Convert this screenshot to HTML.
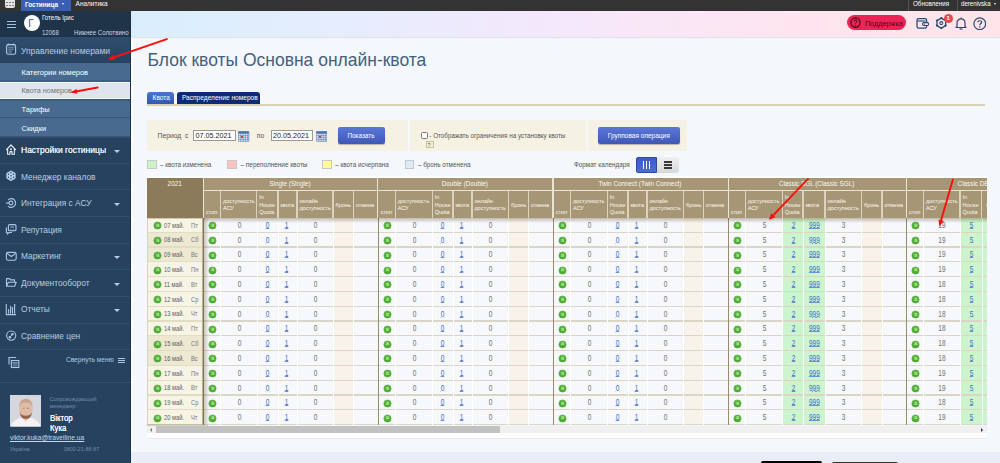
<!DOCTYPE html><html><head><meta charset="utf-8"><style>
html,body{margin:0;padding:0;} body{width:1000px;height:463px;overflow:hidden;position:relative;background:#f4f7fb;font-family:"Liberation Sans", sans-serif;} div{box-sizing:border-box;} u{text-decoration:underline;}
</style></head><body>
<div style="position:absolute;left:0px;top:0px;width:1000px;height:11px;background:#333;"></div>
<div style="position:absolute;left:5px;top:0px;width:10px;height:8px;background:#e6e6e6;border-radius:0 0 2px 2px;"></div>
<div style="position:absolute;left:6.4px;top:1.5px;width:1.6px;height:1.8px;background:#7a7a7a;"></div>
<div style="position:absolute;left:6.4px;top:4.5px;width:1.6px;height:1.8px;background:#7a7a7a;"></div>
<div style="position:absolute;left:9.4px;top:1.5px;width:1.6px;height:1.8px;background:#7a7a7a;"></div>
<div style="position:absolute;left:9.4px;top:4.5px;width:1.6px;height:1.8px;background:#7a7a7a;"></div>
<div style="position:absolute;left:12.4px;top:1.5px;width:1.6px;height:1.8px;background:#7a7a7a;"></div>
<div style="position:absolute;left:12.4px;top:4.5px;width:1.6px;height:1.8px;background:#7a7a7a;"></div>
<div style="position:absolute;left:20.6px;top:0px;width:50px;height:11px;background:#3b5eb5;"></div>
<div style="position:absolute;left:25px;top:1.6px;font-size:6.4px;line-height:1;color:#fff;white-space:nowrap;font-weight:bold;">Гостиница</div>
<div style="position:absolute;left:62.3px;top:3.2px;width:0;height:0;border-left:1.7px solid transparent;border-right:1.7px solid transparent;border-top:2.2px solid #fff;"></div>
<div style="position:absolute;left:75.6px;top:0.8px;font-size:6.46px;line-height:1;color:#fff;white-space:nowrap;">Аналитика</div>
<div style="position:absolute;left:908px;top:0px;width:1px;height:11px;background:#555;"></div>
<div style="position:absolute;left:912.8px;top:0.6px;font-size:6.6px;line-height:1;color:#fff;white-space:nowrap;transform:scaleX(0.95);transform-origin:0 0;">Обновления</div>
<div style="position:absolute;left:956.5px;top:0px;width:1px;height:11px;background:#555;"></div>
<div style="position:absolute;left:960.9px;top:0.5px;font-size:6.8px;line-height:1;color:#fff;white-space:nowrap;transform:scaleX(0.9);transform-origin:0 0;">derenivska</div>
<div style="position:absolute;left:994.3px;top:2.8px;width:0;height:0;border-left:1.7px solid transparent;border-right:1.7px solid transparent;border-top:2.2px solid #fff;"></div>
<div style="position:absolute;left:0px;top:11px;width:131px;height:452px;background:#27425f;"></div>
<div style="position:absolute;left:131px;top:37px;width:2.2px;height:426px;background:#fbfcfe;"></div>
<div style="position:absolute;left:0px;top:11px;width:131px;height:26px;background:#1f3349;"></div>
<div style="position:absolute;left:7px;top:20.5px;width:9px;height:1.3px;background:#9fc3e0;"></div>
<div style="position:absolute;left:7px;top:23.7px;width:9px;height:1.3px;background:#9fc3e0;"></div>
<div style="position:absolute;left:7px;top:26.9px;width:9px;height:1.3px;background:#9fc3e0;"></div>
<div style="position:absolute;left:23.7px;top:14.8px;width:16px;height:16px;border-radius:50%;background:#fff;"></div>
<div style="position:absolute;left:28.2px;top:18.6px;font-size:10px;line-height:1;color:#3a5373;white-space:nowrap;">Г</div>
<div style="position:absolute;left:41.9px;top:14.6px;font-size:7.1px;line-height:1;color:#fff;white-space:nowrap;transform:scaleX(0.85);transform-origin:0 0;">Готель Ірис</div>
<div style="position:absolute;left:41.9px;top:30.4px;font-size:6.5px;line-height:1;color:#c8d6e4;white-space:nowrap;transform:scaleX(0.93);transform-origin:0 0;">12068</div>
<div style="position:absolute;left:73.6px;top:30.4px;font-size:6.5px;line-height:1;color:#c8d6e4;white-space:nowrap;transform:scaleX(0.94);transform-origin:0 0;">Нижнее Солотвино</div>
<div style="position:absolute;left:0px;top:37px;width:131px;height:25.6px;background:linear-gradient(#2e4e70,#28425f);"></div>
<div style="position:absolute;left:20.9px;top:46.8px;font-size:8.8px;line-height:1;color:#b9cde2;white-space:nowrap;transform:scaleX(0.96);transform-origin:0 0;">Управление номерами</div>
<div style="position:absolute;left:0px;top:62.6px;width:131px;height:19.0px;background:#486a8e;"></div>
<div style="position:absolute;left:0px;top:80.6px;width:131px;height:1.1px;background:#37567a;"></div>
<div style="position:absolute;left:21.6px;top:69.0px;font-size:7.42px;line-height:1;color:#fff;white-space:nowrap;">Категории номеров</div>
<div style="position:absolute;left:0px;top:81.6px;width:131px;height:17.8px;background:#dfe5ec;"></div>
<div style="position:absolute;left:21.6px;top:87.4px;font-size:7.29px;line-height:1;color:#6e737b;white-space:nowrap;">Квота номеров</div>
<div style="position:absolute;left:0px;top:99.4px;width:131px;height:19.0px;background:#486a8e;"></div>
<div style="position:absolute;left:0px;top:117.4px;width:131px;height:1.1px;background:#37567a;"></div>
<div style="position:absolute;left:21.6px;top:105.80000000000001px;font-size:7.42px;line-height:1;color:#fff;white-space:nowrap;">Тарифы</div>
<div style="position:absolute;left:0px;top:118.4px;width:131px;height:18.7px;background:#486a8e;"></div>
<div style="position:absolute;left:0px;top:136.1px;width:131px;height:1.1px;background:#37567a;"></div>
<div style="position:absolute;left:21.6px;top:124.65px;font-size:7.42px;line-height:1;color:#fff;white-space:nowrap;">Скидки</div>
<div style="position:absolute;left:0px;top:79.9px;width:131px;height:1.7px;background:#3f5f82;"></div>
<div style="position:absolute;left:0px;top:81.6px;width:131px;height:1.3px;background:#f4f6f9;"></div>
<div style="position:absolute;left:0px;top:97.9px;width:131px;height:1.5px;background:#f4f6f9;"></div>
<div style="position:absolute;left:0px;top:99.4px;width:131px;height:1.6px;background:#3d5c7e;"></div>
<div style="position:absolute;left:0px;top:136.6px;width:131px;height:1px;background:#314e6d;"></div>
<div style="position:absolute;left:21px;top:146.29999999999998px;font-size:9.05px;line-height:1;color:#e8eef5;white-space:nowrap;text-shadow:0 0 0.15px #fff;transform:scaleX(0.94);transform-origin:0 0;">Настройки гостиницы</div>
<div style="position:absolute;left:114px;top:150.1px;width:0;height:0;border-left:3px solid transparent;border-right:3px solid transparent;border-top:3.5px solid #b9cde2;"></div>
<div style="position:absolute;left:0px;top:163.0px;width:131px;height:1px;background:#314e6d;"></div>
<div style="position:absolute;left:21px;top:172.7px;font-size:8.9px;line-height:1;color:#b9cde2;white-space:nowrap;transform:scaleX(0.94);transform-origin:0 0;">Менеджер каналов</div>
<div style="position:absolute;left:0px;top:189.3px;width:131px;height:1px;background:#314e6d;"></div>
<div style="position:absolute;left:21px;top:199.0px;font-size:8.9px;line-height:1;color:#b9cde2;white-space:nowrap;transform:scaleX(0.94);transform-origin:0 0;">Интеграция с АСУ</div>
<div style="position:absolute;left:114px;top:202.8px;width:0;height:0;border-left:3px solid transparent;border-right:3px solid transparent;border-top:3.5px solid #b9cde2;"></div>
<div style="position:absolute;left:0px;top:215.9px;width:131px;height:1px;background:#314e6d;"></div>
<div style="position:absolute;left:21px;top:225.6px;font-size:8.9px;line-height:1;color:#b9cde2;white-space:nowrap;transform:scaleX(0.94);transform-origin:0 0;">Репутация</div>
<div style="position:absolute;left:0px;top:242.5px;width:131px;height:1px;background:#314e6d;"></div>
<div style="position:absolute;left:21px;top:252.2px;font-size:8.9px;line-height:1;color:#b9cde2;white-space:nowrap;transform:scaleX(0.94);transform-origin:0 0;">Маркетинг</div>
<div style="position:absolute;left:114px;top:256.0px;width:0;height:0;border-left:3px solid transparent;border-right:3px solid transparent;border-top:3.5px solid #b9cde2;"></div>
<div style="position:absolute;left:0px;top:269.1px;width:131px;height:1px;background:#314e6d;"></div>
<div style="position:absolute;left:21px;top:278.8px;font-size:8.9px;line-height:1;color:#b9cde2;white-space:nowrap;transform:scaleX(0.94);transform-origin:0 0;">Документооборот</div>
<div style="position:absolute;left:114px;top:282.6px;width:0;height:0;border-left:3px solid transparent;border-right:3px solid transparent;border-top:3.5px solid #b9cde2;"></div>
<div style="position:absolute;left:0px;top:295.7px;width:131px;height:1px;background:#314e6d;"></div>
<div style="position:absolute;left:21px;top:305.4px;font-size:8.9px;line-height:1;color:#b9cde2;white-space:nowrap;transform:scaleX(0.94);transform-origin:0 0;">Отчеты</div>
<div style="position:absolute;left:114px;top:309.2px;width:0;height:0;border-left:3px solid transparent;border-right:3px solid transparent;border-top:3.5px solid #b9cde2;"></div>
<div style="position:absolute;left:0px;top:322.5px;width:131px;height:1px;background:#314e6d;"></div>
<div style="position:absolute;left:21px;top:332.2px;font-size:8.9px;line-height:1;color:#b9cde2;white-space:nowrap;transform:scaleX(0.94);transform-origin:0 0;">Сравнение цен</div>
<div style="position:absolute;left:0px;top:349.3px;width:131px;height:1px;background:#314e6d;"></div>
<svg style="position:absolute;left:0;top:0" width="131" height="463" viewBox="0 0 131 463"><rect x="6.6" y="44.6" width="9" height="9.7" rx="1.8" fill="none" stroke="#aac8e6" stroke-width="1.1"/><path d="M8.3 43 L9.5 45.2 H7.1Z M13.9 43 L15.1 45.2 H12.7Z" fill="#aac8e6"/><path d="M7.8 47.6h6.6M7.8 49.8h6.6M7.8 52h3.8M9.9 46.4v6.6M12.1 46.4v6.6" stroke="#aac8e6" stroke-width="0.5" opacity="0.75"/><rect x="12.4" y="50.4" width="2.2" height="2.4" fill="#1c3350"/><path d="M6.5 149.6 L11 145 L15.5 149.6" fill="none" stroke="#e8eef5" stroke-width="1.2" stroke-linecap="round" stroke-linejoin="round"/><path d="M7.6 148.6 V154.3 H10 V151.6 H12 V154.3 H14.4 V148.6" fill="none" stroke="#e8eef5" stroke-width="1.1" stroke-linejoin="round"/><circle cx="11" cy="149.3" r="1" fill="#e8eef5"/><path d="M11 170.9 L15.2 173.3 V178.3 L11 180.7 L6.8 178.3 V173.3Z" fill="#b8d2ec" stroke="#b8d2ec" stroke-width="0.8" stroke-linejoin="round"/><circle cx="11" cy="172.8" r="0.75" fill="#27425f"/><circle cx="13.5" cy="174.3" r="0.75" fill="#27425f"/><circle cx="13.5" cy="177.3" r="0.75" fill="#27425f"/><circle cx="11" cy="178.8" r="0.75" fill="#27425f"/><circle cx="8.5" cy="177.3" r="0.75" fill="#27425f"/><circle cx="8.5" cy="174.3" r="0.75" fill="#27425f"/><circle cx="11" cy="175.8" r="0.75" fill="#27425f"/><path d="M8 200 A4.4 4.4 0 1 1 8 206" fill="none" stroke="#aac8e6" stroke-width="1.1"/><circle cx="11" cy="203" r="1.9" fill="none" stroke="#aac8e6" stroke-width="1.1"/><path d="M6 203 H9" stroke="#aac8e6" stroke-width="1.2"/><path d="M15.3 202 L16 203 L15.3 204" fill="#aac8e6"/><rect x="8.4" y="224.6" width="7.6" height="6.2" rx="1.3" fill="none" stroke="#aac8e6" stroke-width="1.1"/><path d="M10.5 227 H14" stroke="#aac8e6" stroke-width="0.9"/><path d="M10.4 229.2 L12.5 231 L14 229.3" fill="none" stroke="#aac8e6" stroke-width="0.8"/><path d="M6.4 227.5 V232.5 H7.3 L7.3 234.2 L9.2 232.5 H12" fill="none" stroke="#aac8e6" stroke-width="1.1" stroke-linejoin="round"/><rect x="6.4" y="252.4" width="9.8" height="7.8" rx="1.6" fill="none" stroke="#aac8e6" stroke-width="1.1"/><path d="M7 253.4 L11.3 256.5 L15.6 253.4" fill="none" stroke="#aac8e6" stroke-width="1.1"/><path d="M6.5 286.3 V278.6 H9.5 L10.6 279.9 H14.5 V282" fill="none" stroke="#aac8e6" stroke-width="1.1" stroke-linejoin="round"/><path d="M6.5 286.3 L8.3 282.3 H16.2 L14.6 286.3 Z" fill="none" stroke="#aac8e6" stroke-width="1.1" stroke-linejoin="round"/><path d="M6.3 304 V314.6 H16" fill="none" stroke="#aac8e6" stroke-width="1.1"/><path d="M8.6 309.6 V313.2" stroke="#aac8e6" stroke-width="1.1" stroke-linecap="round"/><path d="M10.6 306.2 V313.2" stroke="#aac8e6" stroke-width="1.1" stroke-linecap="round"/><path d="M12.5 307.6 V313.2" stroke="#aac8e6" stroke-width="1.1" stroke-linecap="round"/><path d="M14.6 304.2 V313.2" stroke="#aac8e6" stroke-width="1.1" stroke-linecap="round"/><circle cx="11.2" cy="335.6" r="4.6" fill="none" stroke="#aac8e6" stroke-width="1.1"/><path d="M9.2 337.8 L13.2 333.6" stroke="#aac8e6" stroke-width="0.8"/><circle cx="9.9" cy="337.2" r="1.3" fill="#aac8e6"/><circle cx="12.4" cy="334.3" r="1.2" fill="#aac8e6"/><path d="M9 364.5 V357.5 H16" fill="none" stroke="#aac8e6" stroke-width="1.1"/><rect x="11.4" y="360.5" width="7.4" height="7" fill="none" stroke="#aac8e6" stroke-width="1.1"/><path d="M12.4 362.9 H17.8" stroke="#aac8e6" stroke-width="1"/><rect x="12.8" y="363.8" width="4.6" height="3" fill="#aac8e6" opacity="0.35"/></svg>
<div style="position:absolute;left:130.2px;top:11px;width:0.8px;height:452px;background:#1d3149;"></div>
<div style="position:absolute;left:65.9px;top:357px;font-size:6.64px;line-height:1;color:#a9c8e6;white-space:nowrap;">Свернуть меню</div>
<div style="position:absolute;left:117.7px;top:357.6px;width:7px;height:1.1px;background:#a9c8e6;"></div>
<div style="position:absolute;left:117.7px;top:360.0px;width:7px;height:1.1px;background:#a9c8e6;"></div>
<div style="position:absolute;left:117.7px;top:362.40000000000003px;width:7px;height:1.1px;background:#a9c8e6;"></div>
<div style="position:absolute;left:0px;top:381.7px;width:131px;height:0.8px;background:#314e6d;"></div>
<svg style="position:absolute;left:9.9px;top:395.3px" width="31.6" height="31.6" viewBox="0 0 32 32"><rect width="32" height="32" fill="#d6d7dd"/><path d="M1 32 C2 27 6 24.5 11 23 L16 26 L21 23 C26 24.5 30 27 31 32Z" fill="#f3f3f5"/><path d="M12.5 21 L16 27 L19.5 21 Z" fill="#e0bfae"/><ellipse cx="16.1" cy="14.2" rx="6.9" ry="10" fill="#dfbba6"/><path d="M9.3 13 C9.3 6 12.5 4 16.1 4 C19.7 4 22.9 6 22.9 13 C22 8.5 19.5 7.5 16.1 7.5 C12.7 7.5 10.2 8.5 9.3 13Z" fill="#c9a290"/><path d="M10 17.5 C10.5 22.5 13 24.3 16.1 24.3 C19.2 24.3 21.7 22.5 22.2 17.5 C21 20.5 19 21 16.1 21 C13.2 21 11.2 20.5 10 17.5Z" fill="#946450"/><path d="M13 13.5h2M17.2 13.5h2" stroke="#8a6a5e" stroke-width="0.6"/></svg>
<div style="position:absolute;left:49.7px;top:396.8px;font-size:5.53px;line-height:1;color:#6e8cab;white-space:nowrap;">Сопровождающий</div>
<div style="position:absolute;left:49.7px;top:404.0px;font-size:5.53px;line-height:1;color:#6e8cab;white-space:nowrap;">менеджер</div>
<div style="position:absolute;left:49.7px;top:414.0px;font-size:8.5px;line-height:1;color:#fff;white-space:nowrap;transform:scaleX(0.92);transform-origin:0 0;text-shadow:0 0 0.3px #fff;">Віктор</div>
<div style="position:absolute;left:49.7px;top:423.8px;font-size:8.5px;line-height:1;color:#fff;white-space:nowrap;transform:scaleX(0.92);transform-origin:0 0;text-shadow:0 0 0.3px #fff;">Кука</div>
<div style="position:absolute;left:9.9px;top:435.1px;font-size:6.68px;line-height:1;color:#c5d9ee;white-space:nowrap;text-decoration:underline;text-decoration-thickness:0.6px;text-underline-offset:0.5px;">viktor.kuka@travelline.ua</div>
<div style="position:absolute;left:9.9px;top:447.2px;font-size:5.6px;line-height:1;color:#6e8cab;white-space:nowrap;">Україна</div>
<div style="position:absolute;left:63.8px;top:447.2px;font-size:5.41px;line-height:1;color:#6e8cab;white-space:nowrap;">0800-21-88-87</div>
<div style="position:absolute;left:131px;top:11px;width:869px;height:26px;background:linear-gradient(90deg,#d9eefd 0%,#e5edfe 23%,#f5e8fb 50%,#ffe5ef 78%,#ffe4e9 100%);box-shadow:0 1px 1px rgba(0,0,0,0.08);"></div>
<div style="position:absolute;left:847px;top:15px;width:59.2px;height:15.3px;background:#ec2455;border-radius:8px;"></div>
<svg style="position:absolute;left:849.5px;top:17.2px" width="11" height="11" viewBox="0 0 11 11"><circle cx="5.5" cy="5.5" r="4.6" fill="none" stroke="#3a0a18" stroke-width="1.1"/><path d="M4 4.3 C4 2.6 7 2.6 7 4.3 C7 5.3 5.5 5.3 5.5 6.6" fill="none" stroke="#3a0a18" stroke-width="1"/><circle cx="5.5" cy="8.2" r="0.6" fill="#3a0a18"/></svg>
<div style="position:absolute;left:864.9px;top:20.1px;font-size:7.28px;line-height:1;color:#4a0a1a;white-space:nowrap;">Поддержка</div>
<svg style="position:absolute;left:0;top:0" width="1000" height="40" viewBox="0 0 1000 40"><rect x="917" y="18.6" width="9.6" height="9.6" rx="1.6" fill="none" stroke="#2d4a72" stroke-width="1.3"/><path d="M917.4 21 H925.5" stroke="#2d4a72" stroke-width="1.1"/><rect x="922.6" y="22.6" width="6" height="2.9" rx="1.2" fill="#ffe6ee" stroke="#2d4a72" stroke-width="1.1"/><circle cx="924.6" cy="24.05" r="0.6" fill="#2d4a72"/></svg>
<svg style="position:absolute;left:0;top:0" width="1000" height="40" viewBox="0 0 1000 40"><path d="M941.30 18.10 L945.63 20.60 L945.63 25.60 L941.30 28.10 L936.97 25.60 L936.97 20.60Z" fill="none" stroke="#2d4a72" stroke-width="1.3" stroke-linejoin="round"/><circle cx="941.30" cy="18.10" r="1.15" fill="#2d4a72"/><circle cx="945.63" cy="20.60" r="1.15" fill="#2d4a72"/><circle cx="945.63" cy="25.60" r="1.15" fill="#2d4a72"/><circle cx="941.30" cy="28.10" r="1.15" fill="#2d4a72"/><circle cx="936.97" cy="25.60" r="1.15" fill="#2d4a72"/><circle cx="936.97" cy="20.60" r="1.15" fill="#2d4a72"/><circle cx="941.3" cy="23.1" r="1.5" fill="none" stroke="#2d4a72" stroke-width="1.1"/></svg>
<div style="position:absolute;left:943.6px;top:13.7px;width:9px;height:9px;border-radius:50%;background:#e8474a;"></div>
<div style="position:absolute;left:946.6px;top:15.0px;font-size:6.2px;line-height:1;color:#fff;white-space:nowrap;font-weight:bold;">1</div>
<svg style="position:absolute;left:954.5px;top:16.5px" width="12" height="13" viewBox="0 0 12 13"><path d="M2 9.5 V6 C2 3.5 3.8 1.8 6 1.8 C8.2 1.8 10 3.5 10 6 V9.5 L11 10.5 H1 Z" fill="none" stroke="#2d4a72" stroke-width="1.2" stroke-linejoin="round"/><path d="M4.8 11.5 C5 12.3 7 12.3 7.2 11.5" fill="none" stroke="#2d4a72" stroke-width="1.1"/><line x1="6" y1="0.5" x2="6" y2="1.8" stroke="#2d4a72" stroke-width="1.1"/></svg>
<svg style="position:absolute;left:972.5px;top:16.5px" width="13.5" height="13.5" viewBox="0 0 13.5 13.5"><circle cx="6.75" cy="6.75" r="5.9" fill="none" stroke="#2d4a72" stroke-width="1.2"/><path d="M4.8 5.3 C4.8 3.2 8.7 3.2 8.7 5.3 C8.7 6.6 6.75 6.6 6.75 8.2" fill="none" stroke="#2d4a72" stroke-width="1.2"/><circle cx="6.75" cy="10.1" r="0.75" fill="#2d4a72"/></svg>
<div style="position:absolute;left:147.5px;top:52.4px;font-size:17.49px;line-height:1;color:#44607f;white-space:nowrap;">Блок квоты Основна онлайн-квота</div>
<div style="position:absolute;left:147.2px;top:91.9px;width:26.9px;height:12px;background:linear-gradient(#4a76d4,#3456b4);border-radius:3px 3px 0 0;"></div>
<div style="position:absolute;left:152.6px;top:94.6px;font-size:6.5px;line-height:1;color:#fff;white-space:nowrap;">Квота</div>
<div style="position:absolute;left:177.1px;top:91.9px;width:83.2px;height:12px;background:#0c2a78;border-radius:3px 3px 0 0;"></div>
<div style="position:absolute;left:181.9px;top:94.6px;font-size:6.6px;line-height:1;color:#fff;white-space:nowrap;">Распределение номеров</div>
<div style="position:absolute;left:147.2px;top:103.9px;width:838px;height:1.9px;background:#d9d2b2;"></div>
<div style="position:absolute;left:147.2px;top:119.9px;width:260.5px;height:30.9px;background:#f5f2e4;"></div>
<div style="position:absolute;left:410px;top:119.9px;width:176px;height:30.9px;background:#f5f2e4;"></div>
<div style="position:absolute;left:588.3px;top:119.9px;width:98.6px;height:30.9px;background:#f5f2e4;"></div>
<div style="position:absolute;left:157.6px;top:132.7px;font-size:6.72px;line-height:1;color:#555;white-space:nowrap;">Период&nbsp; с</div>
<div style="position:absolute;left:193.3px;top:130.3px;width:42.4px;height:10.6px;background:#fff;border:0.8px solid #9a9a9a;"></div>
<div style="position:absolute;left:195.5px;top:131.7px;font-size:7.2px;line-height:1;color:#222;white-space:nowrap;">07.05.2021</div>
<div style="position:absolute;left:270.9px;top:130.3px;width:42.4px;height:10.6px;background:#fff;border:0.8px solid #9a9a9a;"></div>
<div style="position:absolute;left:273.09999999999997px;top:131.7px;font-size:7.2px;line-height:1;color:#222;white-space:nowrap;">20.05.2021</div>
<svg style="position:absolute;left:238.4px;top:130.5px" width="11.2" height="11" viewBox="0 0 11.2 11"><rect x="0.3" y="0.3" width="10.6" height="10.4" rx="1" fill="#dce6f6" stroke="#5a7ab8" stroke-width="0.6"/><rect x="0.3" y="0.3" width="10.6" height="2.4" fill="#4a6fb8"/><path d="M0.5 4.6h10.2M0.5 6.6h10.2M0.5 8.6h10.2M2.8 2.7v8M5.1 2.7v8M7.4 2.7v8M9.7 2.7v8" stroke="#4a6fb8" stroke-width="0.5"/><rect x="3" y="5" width="2" height="1.5" fill="#c03030"/></svg>
<svg style="position:absolute;left:316px;top:130.5px" width="11.2" height="11" viewBox="0 0 11.2 11"><rect x="0.3" y="0.3" width="10.6" height="10.4" rx="1" fill="#dce6f6" stroke="#5a7ab8" stroke-width="0.6"/><rect x="0.3" y="0.3" width="10.6" height="2.4" fill="#4a6fb8"/><path d="M0.5 4.6h10.2M0.5 6.6h10.2M0.5 8.6h10.2M2.8 2.7v8M5.1 2.7v8M7.4 2.7v8M9.7 2.7v8" stroke="#4a6fb8" stroke-width="0.5"/><rect x="3" y="5" width="2" height="1.5" fill="#c03030"/></svg>
<div style="position:absolute;left:256.8px;top:132.7px;font-size:6.72px;line-height:1;color:#555;white-space:nowrap;">по</div>
<div style="position:absolute;left:337.9px;top:126.5px;width:47.2px;height:17.1px;background:linear-gradient(#5a78d8,#3f58b8);border-radius:2px;box-shadow:0 1px 1px rgba(0,0,0,0.25);"></div>
<div style="position:absolute;left:347.5px;top:132.9px;font-size:6.35px;line-height:1;color:#fff;white-space:nowrap;">Показать</div>
<div style="position:absolute;left:420.5px;top:132.4px;width:7px;height:6.9px;background:#fff;border:0.8px solid #777;border-radius:1.5px;"></div>
<div style="position:absolute;left:429.3px;top:132.9px;font-size:6.3px;line-height:1;color:#555;white-space:nowrap;">- Отображать ограничения на установку квоты</div>
<div style="position:absolute;left:425.6px;top:141.2px;width:8px;height:7.2px;background:#f3f0d8;border:0.7px solid #c9c29a;"></div>
<div style="position:absolute;left:427.6px;top:142.5px;font-size:5.5px;line-height:1;color:#6a6340;white-space:nowrap;">?</div>
<div style="position:absolute;left:597.9px;top:126.5px;width:82.1px;height:17.4px;background:linear-gradient(#5a78d8,#3f58b8);border-radius:2px;box-shadow:0 1px 1px rgba(0,0,0,0.25);"></div>
<div style="position:absolute;left:607.8px;top:132.9px;font-size:6.52px;line-height:1;color:#fff;white-space:nowrap;">Групповая операция</div>
<div style="position:absolute;left:147.2px;top:159.6px;width:9.5px;height:9.2px;background:#c8f5c8;border:0.7px solid #c8c8c8;"></div>
<div style="position:absolute;left:160px;top:161.8px;font-size:6.33px;line-height:1;color:#555;white-space:nowrap;">– квота изменена</div>
<div style="position:absolute;left:227.2px;top:159.6px;width:9.5px;height:9.2px;background:#ffc0c0;border:0.7px solid #c8c8c8;"></div>
<div style="position:absolute;left:240.5px;top:161.8px;font-size:6.43px;line-height:1;color:#555;white-space:nowrap;">– переполнение квоты</div>
<div style="position:absolute;left:322px;top:159.6px;width:9.5px;height:9.2px;background:#ffff90;border:0.7px solid #c8c8c8;"></div>
<div style="position:absolute;left:335.2px;top:161.8px;font-size:6.31px;line-height:1;color:#555;white-space:nowrap;">– квота исчерпана</div>
<div style="position:absolute;left:404.8px;top:159.6px;width:9.5px;height:9.2px;background:#dcebfa;border:0.7px solid #c8c8c8;"></div>
<div style="position:absolute;left:418px;top:161.8px;font-size:6.3px;line-height:1;color:#555;white-space:nowrap;">– бронь отменена</div>
<div style="position:absolute;left:573.9px;top:162.1px;font-size:6.36px;line-height:1;color:#555;white-space:nowrap;">Формат календаря</div>
<div style="position:absolute;left:635.7px;top:157.2px;width:43.8px;height:15.7px;background:linear-gradient(#f0f0f0,#d8d8d8);border-radius:2px;"></div>
<div style="position:absolute;left:635.7px;top:157.2px;width:21.1px;height:15.7px;background:linear-gradient(#3c5cc2,#4a6cd6);border:0.7px solid #2c48a6;border-radius:2px 0 0 2px;"></div>
<div style="position:absolute;left:642.5px;top:160.7px;width:1.2px;height:8.7px;background:#fff;"></div>
<div style="position:absolute;left:645.5px;top:160.7px;width:1.2px;height:8.7px;background:#fff;"></div>
<div style="position:absolute;left:648.5px;top:160.7px;width:1.2px;height:8.7px;background:#fff;"></div>
<div style="position:absolute;left:664px;top:161.0px;width:8.4px;height:1.6px;background:#3a3a3a;"></div>
<div style="position:absolute;left:664px;top:164.1px;width:8.4px;height:1.6px;background:#3a3a3a;"></div>
<div style="position:absolute;left:664px;top:167.2px;width:8.4px;height:1.6px;background:#3a3a3a;"></div>
<div style="position:absolute;left:147.1px;top:175.6px;width:840px;height:2.0px;background:#ffffff;"></div>
<div style="position:absolute;left:147.1px;top:177.5px;width:839.9px;height:255.7px;overflow:hidden;">
<div style="position:absolute;left:55.5px;top:40.5px;width:784.4px;height:207.2px;background:#f6f8fb;"></div>
<div style="position:absolute;left:186.1px;top:40.5px;width:20.2px;height:207.2px;background:#f7f3ea;"></div>
<div style="position:absolute;left:361.6px;top:40.5px;width:19.6px;height:207.2px;background:#f7f3ea;"></div>
<div style="position:absolute;left:536.6px;top:40.5px;width:19.6px;height:207.2px;background:#f7f3ea;"></div>
<div style="position:absolute;left:714.5px;top:40.5px;width:20.6px;height:207.2px;background:#f7f3ea;"></div>
<div style="position:absolute;left:635.7px;top:40.5px;width:42.2px;height:207.2px;background:#cdf5cd;"></div>
<div style="position:absolute;left:893.3px;top:40.5px;width:20.6px;height:207.2px;background:#f7f3ea;"></div>
<div style="position:absolute;left:813.6px;top:40.5px;width:43.1px;height:207.2px;background:#cdf5cd;"></div>
<div style="position:absolute;left:55.5px;top:54.0px;width:784.4px;height:1.3px;background:#dbd5c6;"></div>
<div style="position:absolute;left:55.5px;top:68.8px;width:784.4px;height:1.3px;background:#dbd5c6;"></div>
<div style="position:absolute;left:55.5px;top:83.6px;width:784.4px;height:1.3px;background:#dbd5c6;"></div>
<div style="position:absolute;left:55.5px;top:98.4px;width:784.4px;height:1.3px;background:#dbd5c6;"></div>
<div style="position:absolute;left:55.5px;top:113.2px;width:784.4px;height:1.3px;background:#dbd5c6;"></div>
<div style="position:absolute;left:55.5px;top:128.0px;width:784.4px;height:1.3px;background:#dbd5c6;"></div>
<div style="position:absolute;left:55.5px;top:142.8px;width:784.4px;height:1.3px;background:#dbd5c6;"></div>
<div style="position:absolute;left:55.5px;top:157.6px;width:784.4px;height:1.3px;background:#dbd5c6;"></div>
<div style="position:absolute;left:55.5px;top:172.4px;width:784.4px;height:1.3px;background:#dbd5c6;"></div>
<div style="position:absolute;left:55.5px;top:187.2px;width:784.4px;height:1.3px;background:#dbd5c6;"></div>
<div style="position:absolute;left:55.5px;top:202.0px;width:784.4px;height:1.3px;background:#dbd5c6;"></div>
<div style="position:absolute;left:55.5px;top:216.8px;width:784.4px;height:1.3px;background:#dbd5c6;"></div>
<div style="position:absolute;left:55.5px;top:231.6px;width:784.4px;height:1.3px;background:#dbd5c6;"></div>
<div style="position:absolute;left:55.5px;top:246.4px;width:784.4px;height:1.3px;background:#dbd5c6;"></div>
<div style="position:absolute;left:73.3px;top:40.5px;width:1px;height:207.2px;background:#ffffff;"></div>
<div style="position:absolute;left:109.5px;top:40.5px;width:1px;height:207.2px;background:#ffffff;"></div>
<div style="position:absolute;left:130.7px;top:40.5px;width:1px;height:207.2px;background:#ffffff;"></div>
<div style="position:absolute;left:149.7px;top:40.5px;width:1px;height:207.2px;background:#ffffff;"></div>
<div style="position:absolute;left:185.9px;top:40.5px;width:1px;height:207.2px;background:#ffffff;"></div>
<div style="position:absolute;left:206.1px;top:40.5px;width:1px;height:207.2px;background:#ffffff;"></div>
<div style="position:absolute;left:56.0px;top:40.5px;width:1px;height:207.2px;background:#9a8a6a;"></div>
<div style="position:absolute;left:248.0px;top:40.5px;width:1px;height:207.2px;background:#ffffff;"></div>
<div style="position:absolute;left:285.0px;top:40.5px;width:1px;height:207.2px;background:#ffffff;"></div>
<div style="position:absolute;left:305.7px;top:40.5px;width:1px;height:207.2px;background:#ffffff;"></div>
<div style="position:absolute;left:324.7px;top:40.5px;width:1px;height:207.2px;background:#ffffff;"></div>
<div style="position:absolute;left:361.4px;top:40.5px;width:1px;height:207.2px;background:#ffffff;"></div>
<div style="position:absolute;left:381.0px;top:40.5px;width:1px;height:207.2px;background:#ffffff;"></div>
<div style="position:absolute;left:230.7px;top:40.5px;width:1px;height:207.2px;background:#9a8a6a;"></div>
<div style="position:absolute;left:423.2px;top:40.5px;width:1px;height:207.2px;background:#ffffff;"></div>
<div style="position:absolute;left:460.0px;top:40.5px;width:1px;height:207.2px;background:#ffffff;"></div>
<div style="position:absolute;left:480.7px;top:40.5px;width:1px;height:207.2px;background:#ffffff;"></div>
<div style="position:absolute;left:499.7px;top:40.5px;width:1px;height:207.2px;background:#ffffff;"></div>
<div style="position:absolute;left:536.4px;top:40.5px;width:1px;height:207.2px;background:#ffffff;"></div>
<div style="position:absolute;left:556.0px;top:40.5px;width:1px;height:207.2px;background:#ffffff;"></div>
<div style="position:absolute;left:405.9px;top:40.5px;width:1px;height:207.2px;background:#9a8a6a;"></div>
<div style="position:absolute;left:598.0px;top:40.5px;width:1px;height:207.2px;background:#ffffff;"></div>
<div style="position:absolute;left:635.0px;top:40.5px;width:1px;height:207.2px;background:#ffffff;"></div>
<div style="position:absolute;left:655.7px;top:40.5px;width:1px;height:207.2px;background:#ffffff;"></div>
<div style="position:absolute;left:677.7px;top:40.5px;width:1px;height:207.2px;background:#ffffff;"></div>
<div style="position:absolute;left:714.3px;top:40.5px;width:1px;height:207.2px;background:#ffffff;"></div>
<div style="position:absolute;left:734.9px;top:40.5px;width:1px;height:207.2px;background:#ffffff;"></div>
<div style="position:absolute;left:581.0px;top:40.5px;width:1px;height:207.2px;background:#9a8a6a;"></div>
<div style="position:absolute;left:776.3px;top:40.5px;width:1px;height:207.2px;background:#ffffff;"></div>
<div style="position:absolute;left:812.9px;top:40.5px;width:1px;height:207.2px;background:#ffffff;"></div>
<div style="position:absolute;left:834.5px;top:40.5px;width:1px;height:207.2px;background:#ffffff;"></div>
<div style="position:absolute;left:856.5px;top:40.5px;width:1px;height:207.2px;background:#ffffff;"></div>
<div style="position:absolute;left:893.1px;top:40.5px;width:1px;height:207.2px;background:#ffffff;"></div>
<div style="position:absolute;left:913.7px;top:40.5px;width:1px;height:207.2px;background:#ffffff;"></div>
<div style="position:absolute;left:759.0px;top:40.5px;width:1px;height:207.2px;background:#9a8a6a;"></div>
<div style="position:absolute;left:62.1px;top:44.6px;width:7.0px;height:7.0px;background:radial-gradient(circle at 50% 40%,#74c850 0%,#44a828 60%,#2c8c18 100%);border-radius:50%;box-shadow:0 0 0 0.3px #2a8218;"><div style="position:absolute;left:0;top:0.9px;width:7px;text-align:center;font-size:5.6px;line-height:5.6px;font-weight:bold;color:rgba(220,255,210,0.6);">a</div></div>
<div style="position:absolute;left:74.1px;top:43.2px;font-size:8.8px;line-height:1;color:#727272;white-space:nowrap;width:36.20000000000002px;text-align:center;"><span style="display:inline-block;transform:scaleX(0.74);">0</span></div>
<div style="position:absolute;left:109.9px;top:43.2px;font-size:8.8px;line-height:1;color:#4070c8;white-space:nowrap;width:21.19999999999999px;text-align:center;"><span style="display:inline-block;transform:scaleX(0.74);text-decoration:underline;text-decoration-thickness:0.5px;text-underline-offset:0.1px;text-decoration-color:#6a90d8;">0</span></div>
<div style="position:absolute;left:129.7px;top:43.2px;font-size:8.8px;line-height:1;color:#4070c8;white-space:nowrap;width:19.0px;text-align:center;"><span style="display:inline-block;transform:scaleX(0.74);text-decoration:underline;text-decoration-thickness:0.5px;text-underline-offset:0.1px;text-decoration-color:#6a90d8;">1</span></div>
<div style="position:absolute;left:149.9px;top:43.2px;font-size:8.8px;line-height:1;color:#727272;white-space:nowrap;width:36.19999999999999px;text-align:center;"><span style="display:inline-block;transform:scaleX(0.74);">0</span></div>
<div style="position:absolute;left:236.8px;top:44.6px;width:7.0px;height:7.0px;background:radial-gradient(circle at 50% 40%,#74c850 0%,#44a828 60%,#2c8c18 100%);border-radius:50%;box-shadow:0 0 0 0.3px #2a8218;"><div style="position:absolute;left:0;top:0.9px;width:7px;text-align:center;font-size:5.6px;line-height:5.6px;font-weight:bold;color:rgba(220,255,210,0.6);">a</div></div>
<div style="position:absolute;left:248.8px;top:43.2px;font-size:8.8px;line-height:1;color:#727272;white-space:nowrap;width:37.0px;text-align:center;"><span style="display:inline-block;transform:scaleX(0.74);">0</span></div>
<div style="position:absolute;left:285.4px;top:43.2px;font-size:8.8px;line-height:1;color:#4070c8;white-space:nowrap;width:20.69999999999999px;text-align:center;"><span style="display:inline-block;transform:scaleX(0.74);text-decoration:underline;text-decoration-thickness:0.5px;text-underline-offset:0.1px;text-decoration-color:#6a90d8;">0</span></div>
<div style="position:absolute;left:304.7px;top:43.2px;font-size:8.8px;line-height:1;color:#4070c8;white-space:nowrap;width:19.0px;text-align:center;"><span style="display:inline-block;transform:scaleX(0.74);text-decoration:underline;text-decoration-thickness:0.5px;text-underline-offset:0.1px;text-decoration-color:#6a90d8;">1</span></div>
<div style="position:absolute;left:324.9px;top:43.2px;font-size:8.8px;line-height:1;color:#727272;white-space:nowrap;width:36.69999999999999px;text-align:center;"><span style="display:inline-block;transform:scaleX(0.74);">0</span></div>
<div style="position:absolute;left:412.0px;top:44.6px;width:7.0px;height:7.0px;background:radial-gradient(circle at 50% 40%,#74c850 0%,#44a828 60%,#2c8c18 100%);border-radius:50%;box-shadow:0 0 0 0.3px #2a8218;"><div style="position:absolute;left:0;top:0.9px;width:7px;text-align:center;font-size:5.6px;line-height:5.6px;font-weight:bold;color:rgba(220,255,210,0.6);">a</div></div>
<div style="position:absolute;left:424.0px;top:43.2px;font-size:8.8px;line-height:1;color:#727272;white-space:nowrap;width:36.799999999999955px;text-align:center;"><span style="display:inline-block;transform:scaleX(0.74);">0</span></div>
<div style="position:absolute;left:460.4px;top:43.2px;font-size:8.8px;line-height:1;color:#4070c8;white-space:nowrap;width:20.700000000000045px;text-align:center;"><span style="display:inline-block;transform:scaleX(0.74);text-decoration:underline;text-decoration-thickness:0.5px;text-underline-offset:0.1px;text-decoration-color:#6a90d8;">0</span></div>
<div style="position:absolute;left:479.7px;top:43.2px;font-size:8.8px;line-height:1;color:#4070c8;white-space:nowrap;width:19.0px;text-align:center;"><span style="display:inline-block;transform:scaleX(0.74);text-decoration:underline;text-decoration-thickness:0.5px;text-underline-offset:0.1px;text-decoration-color:#6a90d8;">1</span></div>
<div style="position:absolute;left:499.9px;top:43.2px;font-size:8.8px;line-height:1;color:#727272;white-space:nowrap;width:36.700000000000045px;text-align:center;"><span style="display:inline-block;transform:scaleX(0.74);">0</span></div>
<div style="position:absolute;left:586.95px;top:44.6px;width:7.0px;height:7.0px;background:radial-gradient(circle at 50% 40%,#74c850 0%,#44a828 60%,#2c8c18 100%);border-radius:50%;box-shadow:0 0 0 0.3px #2a8218;"><div style="position:absolute;left:0;top:0.9px;width:7px;text-align:center;font-size:5.6px;line-height:5.6px;font-weight:bold;color:rgba(220,255,210,0.6);">a</div></div>
<div style="position:absolute;left:598.5px;top:43.2px;font-size:8.8px;line-height:1;color:#727272;white-space:nowrap;width:37.0px;text-align:center;"><span style="display:inline-block;transform:scaleX(0.74);">5</span></div>
<div style="position:absolute;left:636.0px;top:43.2px;font-size:8.8px;line-height:1;color:#4070c8;white-space:nowrap;width:20.700000000000045px;text-align:center;"><span style="display:inline-block;transform:scaleX(0.74);text-decoration:underline;text-decoration-thickness:0.5px;text-underline-offset:0.1px;text-decoration-color:#6a90d8;">2</span></div>
<div style="position:absolute;left:656.2px;top:43.2px;font-size:8.8px;line-height:1;color:#4070c8;white-space:nowrap;width:22.0px;text-align:center;"><span style="display:inline-block;transform:scaleX(0.74);text-decoration:underline;text-decoration-thickness:0.5px;text-underline-offset:0.1px;text-decoration-color:#6a90d8;">999</span></div>
<div style="position:absolute;left:678.4px;top:43.2px;font-size:8.8px;line-height:1;color:#727272;white-space:nowrap;width:36.60000000000002px;text-align:center;"><span style="display:inline-block;transform:scaleX(0.74);">3</span></div>
<div style="position:absolute;left:765.1px;top:44.6px;width:7.0px;height:7.0px;background:radial-gradient(circle at 50% 40%,#74c850 0%,#44a828 60%,#2c8c18 100%);border-radius:50%;box-shadow:0 0 0 0.3px #2a8218;"><div style="position:absolute;left:0;top:0.9px;width:7px;text-align:center;font-size:5.6px;line-height:5.6px;font-weight:bold;color:rgba(220,255,210,0.6);">a</div></div>
<div style="position:absolute;left:776.8px;top:43.2px;font-size:8.8px;line-height:1;color:#727272;white-space:nowrap;width:36.60000000000002px;text-align:center;"><span style="display:inline-block;transform:scaleX(0.74);">19</span></div>
<div style="position:absolute;left:813.9px;top:43.2px;font-size:8.8px;line-height:1;color:#4070c8;white-space:nowrap;width:21.59999999999991px;text-align:center;"><span style="display:inline-block;transform:scaleX(0.74);text-decoration:underline;text-decoration-thickness:0.5px;text-underline-offset:0.1px;text-decoration-color:#6a90d8;">5</span></div>
<div style="position:absolute;left:835.0px;top:43.2px;font-size:8.8px;line-height:1;color:#4070c8;white-space:nowrap;width:22.0px;text-align:center;"><span style="display:inline-block;transform:scaleX(0.74);text-decoration:underline;text-decoration-thickness:0.5px;text-underline-offset:0.1px;text-decoration-color:#6a90d8;">999</span></div>
<div style="position:absolute;left:857.2px;top:43.2px;font-size:8.8px;line-height:1;color:#727272;white-space:nowrap;width:36.600000000000136px;text-align:center;"><span style="display:inline-block;transform:scaleX(0.74);">3</span></div>
<div style="position:absolute;left:62.1px;top:59.4px;width:7.0px;height:7.0px;background:radial-gradient(circle at 50% 40%,#74c850 0%,#44a828 60%,#2c8c18 100%);border-radius:50%;box-shadow:0 0 0 0.3px #2a8218;"><div style="position:absolute;left:0;top:0.9px;width:7px;text-align:center;font-size:5.6px;line-height:5.6px;font-weight:bold;color:rgba(220,255,210,0.6);">a</div></div>
<div style="position:absolute;left:74.1px;top:58.0px;font-size:8.8px;line-height:1;color:#727272;white-space:nowrap;width:36.20000000000002px;text-align:center;"><span style="display:inline-block;transform:scaleX(0.74);">0</span></div>
<div style="position:absolute;left:109.9px;top:58.0px;font-size:8.8px;line-height:1;color:#4070c8;white-space:nowrap;width:21.19999999999999px;text-align:center;"><span style="display:inline-block;transform:scaleX(0.74);text-decoration:underline;text-decoration-thickness:0.5px;text-underline-offset:0.1px;text-decoration-color:#6a90d8;">0</span></div>
<div style="position:absolute;left:129.7px;top:58.0px;font-size:8.8px;line-height:1;color:#4070c8;white-space:nowrap;width:19.0px;text-align:center;"><span style="display:inline-block;transform:scaleX(0.74);text-decoration:underline;text-decoration-thickness:0.5px;text-underline-offset:0.1px;text-decoration-color:#6a90d8;">1</span></div>
<div style="position:absolute;left:149.9px;top:58.0px;font-size:8.8px;line-height:1;color:#727272;white-space:nowrap;width:36.19999999999999px;text-align:center;"><span style="display:inline-block;transform:scaleX(0.74);">0</span></div>
<div style="position:absolute;left:236.8px;top:59.4px;width:7.0px;height:7.0px;background:radial-gradient(circle at 50% 40%,#74c850 0%,#44a828 60%,#2c8c18 100%);border-radius:50%;box-shadow:0 0 0 0.3px #2a8218;"><div style="position:absolute;left:0;top:0.9px;width:7px;text-align:center;font-size:5.6px;line-height:5.6px;font-weight:bold;color:rgba(220,255,210,0.6);">a</div></div>
<div style="position:absolute;left:248.8px;top:58.0px;font-size:8.8px;line-height:1;color:#727272;white-space:nowrap;width:37.0px;text-align:center;"><span style="display:inline-block;transform:scaleX(0.74);">0</span></div>
<div style="position:absolute;left:285.4px;top:58.0px;font-size:8.8px;line-height:1;color:#4070c8;white-space:nowrap;width:20.69999999999999px;text-align:center;"><span style="display:inline-block;transform:scaleX(0.74);text-decoration:underline;text-decoration-thickness:0.5px;text-underline-offset:0.1px;text-decoration-color:#6a90d8;">0</span></div>
<div style="position:absolute;left:304.7px;top:58.0px;font-size:8.8px;line-height:1;color:#4070c8;white-space:nowrap;width:19.0px;text-align:center;"><span style="display:inline-block;transform:scaleX(0.74);text-decoration:underline;text-decoration-thickness:0.5px;text-underline-offset:0.1px;text-decoration-color:#6a90d8;">1</span></div>
<div style="position:absolute;left:324.9px;top:58.0px;font-size:8.8px;line-height:1;color:#727272;white-space:nowrap;width:36.69999999999999px;text-align:center;"><span style="display:inline-block;transform:scaleX(0.74);">0</span></div>
<div style="position:absolute;left:412.0px;top:59.4px;width:7.0px;height:7.0px;background:radial-gradient(circle at 50% 40%,#74c850 0%,#44a828 60%,#2c8c18 100%);border-radius:50%;box-shadow:0 0 0 0.3px #2a8218;"><div style="position:absolute;left:0;top:0.9px;width:7px;text-align:center;font-size:5.6px;line-height:5.6px;font-weight:bold;color:rgba(220,255,210,0.6);">a</div></div>
<div style="position:absolute;left:424.0px;top:58.0px;font-size:8.8px;line-height:1;color:#727272;white-space:nowrap;width:36.799999999999955px;text-align:center;"><span style="display:inline-block;transform:scaleX(0.74);">0</span></div>
<div style="position:absolute;left:460.4px;top:58.0px;font-size:8.8px;line-height:1;color:#4070c8;white-space:nowrap;width:20.700000000000045px;text-align:center;"><span style="display:inline-block;transform:scaleX(0.74);text-decoration:underline;text-decoration-thickness:0.5px;text-underline-offset:0.1px;text-decoration-color:#6a90d8;">0</span></div>
<div style="position:absolute;left:479.7px;top:58.0px;font-size:8.8px;line-height:1;color:#4070c8;white-space:nowrap;width:19.0px;text-align:center;"><span style="display:inline-block;transform:scaleX(0.74);text-decoration:underline;text-decoration-thickness:0.5px;text-underline-offset:0.1px;text-decoration-color:#6a90d8;">1</span></div>
<div style="position:absolute;left:499.9px;top:58.0px;font-size:8.8px;line-height:1;color:#727272;white-space:nowrap;width:36.700000000000045px;text-align:center;"><span style="display:inline-block;transform:scaleX(0.74);">0</span></div>
<div style="position:absolute;left:586.95px;top:59.4px;width:7.0px;height:7.0px;background:radial-gradient(circle at 50% 40%,#74c850 0%,#44a828 60%,#2c8c18 100%);border-radius:50%;box-shadow:0 0 0 0.3px #2a8218;"><div style="position:absolute;left:0;top:0.9px;width:7px;text-align:center;font-size:5.6px;line-height:5.6px;font-weight:bold;color:rgba(220,255,210,0.6);">a</div></div>
<div style="position:absolute;left:598.5px;top:58.0px;font-size:8.8px;line-height:1;color:#727272;white-space:nowrap;width:37.0px;text-align:center;"><span style="display:inline-block;transform:scaleX(0.74);">5</span></div>
<div style="position:absolute;left:636.0px;top:58.0px;font-size:8.8px;line-height:1;color:#4070c8;white-space:nowrap;width:20.700000000000045px;text-align:center;"><span style="display:inline-block;transform:scaleX(0.74);text-decoration:underline;text-decoration-thickness:0.5px;text-underline-offset:0.1px;text-decoration-color:#6a90d8;">2</span></div>
<div style="position:absolute;left:656.2px;top:58.0px;font-size:8.8px;line-height:1;color:#4070c8;white-space:nowrap;width:22.0px;text-align:center;"><span style="display:inline-block;transform:scaleX(0.74);text-decoration:underline;text-decoration-thickness:0.5px;text-underline-offset:0.1px;text-decoration-color:#6a90d8;">999</span></div>
<div style="position:absolute;left:678.4px;top:58.0px;font-size:8.8px;line-height:1;color:#727272;white-space:nowrap;width:36.60000000000002px;text-align:center;"><span style="display:inline-block;transform:scaleX(0.74);">3</span></div>
<div style="position:absolute;left:765.1px;top:59.4px;width:7.0px;height:7.0px;background:radial-gradient(circle at 50% 40%,#74c850 0%,#44a828 60%,#2c8c18 100%);border-radius:50%;box-shadow:0 0 0 0.3px #2a8218;"><div style="position:absolute;left:0;top:0.9px;width:7px;text-align:center;font-size:5.6px;line-height:5.6px;font-weight:bold;color:rgba(220,255,210,0.6);">a</div></div>
<div style="position:absolute;left:776.8px;top:58.0px;font-size:8.8px;line-height:1;color:#727272;white-space:nowrap;width:36.60000000000002px;text-align:center;"><span style="display:inline-block;transform:scaleX(0.74);">19</span></div>
<div style="position:absolute;left:813.9px;top:58.0px;font-size:8.8px;line-height:1;color:#4070c8;white-space:nowrap;width:21.59999999999991px;text-align:center;"><span style="display:inline-block;transform:scaleX(0.74);text-decoration:underline;text-decoration-thickness:0.5px;text-underline-offset:0.1px;text-decoration-color:#6a90d8;">5</span></div>
<div style="position:absolute;left:835.0px;top:58.0px;font-size:8.8px;line-height:1;color:#4070c8;white-space:nowrap;width:22.0px;text-align:center;"><span style="display:inline-block;transform:scaleX(0.74);text-decoration:underline;text-decoration-thickness:0.5px;text-underline-offset:0.1px;text-decoration-color:#6a90d8;">999</span></div>
<div style="position:absolute;left:857.2px;top:58.0px;font-size:8.8px;line-height:1;color:#727272;white-space:nowrap;width:36.600000000000136px;text-align:center;"><span style="display:inline-block;transform:scaleX(0.74);">3</span></div>
<div style="position:absolute;left:62.1px;top:74.2px;width:7.0px;height:7.0px;background:radial-gradient(circle at 50% 40%,#74c850 0%,#44a828 60%,#2c8c18 100%);border-radius:50%;box-shadow:0 0 0 0.3px #2a8218;"><div style="position:absolute;left:0;top:0.9px;width:7px;text-align:center;font-size:5.6px;line-height:5.6px;font-weight:bold;color:rgba(220,255,210,0.6);">a</div></div>
<div style="position:absolute;left:74.1px;top:72.8px;font-size:8.8px;line-height:1;color:#727272;white-space:nowrap;width:36.20000000000002px;text-align:center;"><span style="display:inline-block;transform:scaleX(0.74);">0</span></div>
<div style="position:absolute;left:109.9px;top:72.8px;font-size:8.8px;line-height:1;color:#4070c8;white-space:nowrap;width:21.19999999999999px;text-align:center;"><span style="display:inline-block;transform:scaleX(0.74);text-decoration:underline;text-decoration-thickness:0.5px;text-underline-offset:0.1px;text-decoration-color:#6a90d8;">0</span></div>
<div style="position:absolute;left:129.7px;top:72.8px;font-size:8.8px;line-height:1;color:#4070c8;white-space:nowrap;width:19.0px;text-align:center;"><span style="display:inline-block;transform:scaleX(0.74);text-decoration:underline;text-decoration-thickness:0.5px;text-underline-offset:0.1px;text-decoration-color:#6a90d8;">1</span></div>
<div style="position:absolute;left:149.9px;top:72.8px;font-size:8.8px;line-height:1;color:#727272;white-space:nowrap;width:36.19999999999999px;text-align:center;"><span style="display:inline-block;transform:scaleX(0.74);">0</span></div>
<div style="position:absolute;left:236.8px;top:74.2px;width:7.0px;height:7.0px;background:radial-gradient(circle at 50% 40%,#74c850 0%,#44a828 60%,#2c8c18 100%);border-radius:50%;box-shadow:0 0 0 0.3px #2a8218;"><div style="position:absolute;left:0;top:0.9px;width:7px;text-align:center;font-size:5.6px;line-height:5.6px;font-weight:bold;color:rgba(220,255,210,0.6);">a</div></div>
<div style="position:absolute;left:248.8px;top:72.8px;font-size:8.8px;line-height:1;color:#727272;white-space:nowrap;width:37.0px;text-align:center;"><span style="display:inline-block;transform:scaleX(0.74);">0</span></div>
<div style="position:absolute;left:285.4px;top:72.8px;font-size:8.8px;line-height:1;color:#4070c8;white-space:nowrap;width:20.69999999999999px;text-align:center;"><span style="display:inline-block;transform:scaleX(0.74);text-decoration:underline;text-decoration-thickness:0.5px;text-underline-offset:0.1px;text-decoration-color:#6a90d8;">0</span></div>
<div style="position:absolute;left:304.7px;top:72.8px;font-size:8.8px;line-height:1;color:#4070c8;white-space:nowrap;width:19.0px;text-align:center;"><span style="display:inline-block;transform:scaleX(0.74);text-decoration:underline;text-decoration-thickness:0.5px;text-underline-offset:0.1px;text-decoration-color:#6a90d8;">1</span></div>
<div style="position:absolute;left:324.9px;top:72.8px;font-size:8.8px;line-height:1;color:#727272;white-space:nowrap;width:36.69999999999999px;text-align:center;"><span style="display:inline-block;transform:scaleX(0.74);">0</span></div>
<div style="position:absolute;left:412.0px;top:74.2px;width:7.0px;height:7.0px;background:radial-gradient(circle at 50% 40%,#74c850 0%,#44a828 60%,#2c8c18 100%);border-radius:50%;box-shadow:0 0 0 0.3px #2a8218;"><div style="position:absolute;left:0;top:0.9px;width:7px;text-align:center;font-size:5.6px;line-height:5.6px;font-weight:bold;color:rgba(220,255,210,0.6);">a</div></div>
<div style="position:absolute;left:424.0px;top:72.8px;font-size:8.8px;line-height:1;color:#727272;white-space:nowrap;width:36.799999999999955px;text-align:center;"><span style="display:inline-block;transform:scaleX(0.74);">0</span></div>
<div style="position:absolute;left:460.4px;top:72.8px;font-size:8.8px;line-height:1;color:#4070c8;white-space:nowrap;width:20.700000000000045px;text-align:center;"><span style="display:inline-block;transform:scaleX(0.74);text-decoration:underline;text-decoration-thickness:0.5px;text-underline-offset:0.1px;text-decoration-color:#6a90d8;">0</span></div>
<div style="position:absolute;left:479.7px;top:72.8px;font-size:8.8px;line-height:1;color:#4070c8;white-space:nowrap;width:19.0px;text-align:center;"><span style="display:inline-block;transform:scaleX(0.74);text-decoration:underline;text-decoration-thickness:0.5px;text-underline-offset:0.1px;text-decoration-color:#6a90d8;">1</span></div>
<div style="position:absolute;left:499.9px;top:72.8px;font-size:8.8px;line-height:1;color:#727272;white-space:nowrap;width:36.700000000000045px;text-align:center;"><span style="display:inline-block;transform:scaleX(0.74);">0</span></div>
<div style="position:absolute;left:586.95px;top:74.2px;width:7.0px;height:7.0px;background:radial-gradient(circle at 50% 40%,#74c850 0%,#44a828 60%,#2c8c18 100%);border-radius:50%;box-shadow:0 0 0 0.3px #2a8218;"><div style="position:absolute;left:0;top:0.9px;width:7px;text-align:center;font-size:5.6px;line-height:5.6px;font-weight:bold;color:rgba(220,255,210,0.6);">a</div></div>
<div style="position:absolute;left:598.5px;top:72.8px;font-size:8.8px;line-height:1;color:#727272;white-space:nowrap;width:37.0px;text-align:center;"><span style="display:inline-block;transform:scaleX(0.74);">5</span></div>
<div style="position:absolute;left:636.0px;top:72.8px;font-size:8.8px;line-height:1;color:#4070c8;white-space:nowrap;width:20.700000000000045px;text-align:center;"><span style="display:inline-block;transform:scaleX(0.74);text-decoration:underline;text-decoration-thickness:0.5px;text-underline-offset:0.1px;text-decoration-color:#6a90d8;">2</span></div>
<div style="position:absolute;left:656.2px;top:72.8px;font-size:8.8px;line-height:1;color:#4070c8;white-space:nowrap;width:22.0px;text-align:center;"><span style="display:inline-block;transform:scaleX(0.74);text-decoration:underline;text-decoration-thickness:0.5px;text-underline-offset:0.1px;text-decoration-color:#6a90d8;">999</span></div>
<div style="position:absolute;left:678.4px;top:72.8px;font-size:8.8px;line-height:1;color:#727272;white-space:nowrap;width:36.60000000000002px;text-align:center;"><span style="display:inline-block;transform:scaleX(0.74);">3</span></div>
<div style="position:absolute;left:765.1px;top:74.2px;width:7.0px;height:7.0px;background:radial-gradient(circle at 50% 40%,#74c850 0%,#44a828 60%,#2c8c18 100%);border-radius:50%;box-shadow:0 0 0 0.3px #2a8218;"><div style="position:absolute;left:0;top:0.9px;width:7px;text-align:center;font-size:5.6px;line-height:5.6px;font-weight:bold;color:rgba(220,255,210,0.6);">a</div></div>
<div style="position:absolute;left:776.8px;top:72.8px;font-size:8.8px;line-height:1;color:#727272;white-space:nowrap;width:36.60000000000002px;text-align:center;"><span style="display:inline-block;transform:scaleX(0.74);">19</span></div>
<div style="position:absolute;left:813.9px;top:72.8px;font-size:8.8px;line-height:1;color:#4070c8;white-space:nowrap;width:21.59999999999991px;text-align:center;"><span style="display:inline-block;transform:scaleX(0.74);text-decoration:underline;text-decoration-thickness:0.5px;text-underline-offset:0.1px;text-decoration-color:#6a90d8;">5</span></div>
<div style="position:absolute;left:835.0px;top:72.8px;font-size:8.8px;line-height:1;color:#4070c8;white-space:nowrap;width:22.0px;text-align:center;"><span style="display:inline-block;transform:scaleX(0.74);text-decoration:underline;text-decoration-thickness:0.5px;text-underline-offset:0.1px;text-decoration-color:#6a90d8;">999</span></div>
<div style="position:absolute;left:857.2px;top:72.8px;font-size:8.8px;line-height:1;color:#727272;white-space:nowrap;width:36.600000000000136px;text-align:center;"><span style="display:inline-block;transform:scaleX(0.74);">3</span></div>
<div style="position:absolute;left:62.1px;top:89.0px;width:7.0px;height:7.0px;background:radial-gradient(circle at 50% 40%,#74c850 0%,#44a828 60%,#2c8c18 100%);border-radius:50%;box-shadow:0 0 0 0.3px #2a8218;"><div style="position:absolute;left:0;top:0.9px;width:7px;text-align:center;font-size:5.6px;line-height:5.6px;font-weight:bold;color:rgba(220,255,210,0.6);">a</div></div>
<div style="position:absolute;left:74.1px;top:87.6px;font-size:8.8px;line-height:1;color:#727272;white-space:nowrap;width:36.20000000000002px;text-align:center;"><span style="display:inline-block;transform:scaleX(0.74);">0</span></div>
<div style="position:absolute;left:109.9px;top:87.6px;font-size:8.8px;line-height:1;color:#4070c8;white-space:nowrap;width:21.19999999999999px;text-align:center;"><span style="display:inline-block;transform:scaleX(0.74);text-decoration:underline;text-decoration-thickness:0.5px;text-underline-offset:0.1px;text-decoration-color:#6a90d8;">0</span></div>
<div style="position:absolute;left:129.7px;top:87.6px;font-size:8.8px;line-height:1;color:#4070c8;white-space:nowrap;width:19.0px;text-align:center;"><span style="display:inline-block;transform:scaleX(0.74);text-decoration:underline;text-decoration-thickness:0.5px;text-underline-offset:0.1px;text-decoration-color:#6a90d8;">1</span></div>
<div style="position:absolute;left:149.9px;top:87.6px;font-size:8.8px;line-height:1;color:#727272;white-space:nowrap;width:36.19999999999999px;text-align:center;"><span style="display:inline-block;transform:scaleX(0.74);">0</span></div>
<div style="position:absolute;left:236.8px;top:89.0px;width:7.0px;height:7.0px;background:radial-gradient(circle at 50% 40%,#74c850 0%,#44a828 60%,#2c8c18 100%);border-radius:50%;box-shadow:0 0 0 0.3px #2a8218;"><div style="position:absolute;left:0;top:0.9px;width:7px;text-align:center;font-size:5.6px;line-height:5.6px;font-weight:bold;color:rgba(220,255,210,0.6);">a</div></div>
<div style="position:absolute;left:248.8px;top:87.6px;font-size:8.8px;line-height:1;color:#727272;white-space:nowrap;width:37.0px;text-align:center;"><span style="display:inline-block;transform:scaleX(0.74);">0</span></div>
<div style="position:absolute;left:285.4px;top:87.6px;font-size:8.8px;line-height:1;color:#4070c8;white-space:nowrap;width:20.69999999999999px;text-align:center;"><span style="display:inline-block;transform:scaleX(0.74);text-decoration:underline;text-decoration-thickness:0.5px;text-underline-offset:0.1px;text-decoration-color:#6a90d8;">0</span></div>
<div style="position:absolute;left:304.7px;top:87.6px;font-size:8.8px;line-height:1;color:#4070c8;white-space:nowrap;width:19.0px;text-align:center;"><span style="display:inline-block;transform:scaleX(0.74);text-decoration:underline;text-decoration-thickness:0.5px;text-underline-offset:0.1px;text-decoration-color:#6a90d8;">1</span></div>
<div style="position:absolute;left:324.9px;top:87.6px;font-size:8.8px;line-height:1;color:#727272;white-space:nowrap;width:36.69999999999999px;text-align:center;"><span style="display:inline-block;transform:scaleX(0.74);">0</span></div>
<div style="position:absolute;left:412.0px;top:89.0px;width:7.0px;height:7.0px;background:radial-gradient(circle at 50% 40%,#74c850 0%,#44a828 60%,#2c8c18 100%);border-radius:50%;box-shadow:0 0 0 0.3px #2a8218;"><div style="position:absolute;left:0;top:0.9px;width:7px;text-align:center;font-size:5.6px;line-height:5.6px;font-weight:bold;color:rgba(220,255,210,0.6);">a</div></div>
<div style="position:absolute;left:424.0px;top:87.6px;font-size:8.8px;line-height:1;color:#727272;white-space:nowrap;width:36.799999999999955px;text-align:center;"><span style="display:inline-block;transform:scaleX(0.74);">0</span></div>
<div style="position:absolute;left:460.4px;top:87.6px;font-size:8.8px;line-height:1;color:#4070c8;white-space:nowrap;width:20.700000000000045px;text-align:center;"><span style="display:inline-block;transform:scaleX(0.74);text-decoration:underline;text-decoration-thickness:0.5px;text-underline-offset:0.1px;text-decoration-color:#6a90d8;">0</span></div>
<div style="position:absolute;left:479.7px;top:87.6px;font-size:8.8px;line-height:1;color:#4070c8;white-space:nowrap;width:19.0px;text-align:center;"><span style="display:inline-block;transform:scaleX(0.74);text-decoration:underline;text-decoration-thickness:0.5px;text-underline-offset:0.1px;text-decoration-color:#6a90d8;">1</span></div>
<div style="position:absolute;left:499.9px;top:87.6px;font-size:8.8px;line-height:1;color:#727272;white-space:nowrap;width:36.700000000000045px;text-align:center;"><span style="display:inline-block;transform:scaleX(0.74);">0</span></div>
<div style="position:absolute;left:586.95px;top:89.0px;width:7.0px;height:7.0px;background:radial-gradient(circle at 50% 40%,#74c850 0%,#44a828 60%,#2c8c18 100%);border-radius:50%;box-shadow:0 0 0 0.3px #2a8218;"><div style="position:absolute;left:0;top:0.9px;width:7px;text-align:center;font-size:5.6px;line-height:5.6px;font-weight:bold;color:rgba(220,255,210,0.6);">a</div></div>
<div style="position:absolute;left:598.5px;top:87.6px;font-size:8.8px;line-height:1;color:#727272;white-space:nowrap;width:37.0px;text-align:center;"><span style="display:inline-block;transform:scaleX(0.74);">5</span></div>
<div style="position:absolute;left:636.0px;top:87.6px;font-size:8.8px;line-height:1;color:#4070c8;white-space:nowrap;width:20.700000000000045px;text-align:center;"><span style="display:inline-block;transform:scaleX(0.74);text-decoration:underline;text-decoration-thickness:0.5px;text-underline-offset:0.1px;text-decoration-color:#6a90d8;">2</span></div>
<div style="position:absolute;left:656.2px;top:87.6px;font-size:8.8px;line-height:1;color:#4070c8;white-space:nowrap;width:22.0px;text-align:center;"><span style="display:inline-block;transform:scaleX(0.74);text-decoration:underline;text-decoration-thickness:0.5px;text-underline-offset:0.1px;text-decoration-color:#6a90d8;">999</span></div>
<div style="position:absolute;left:678.4px;top:87.6px;font-size:8.8px;line-height:1;color:#727272;white-space:nowrap;width:36.60000000000002px;text-align:center;"><span style="display:inline-block;transform:scaleX(0.74);">3</span></div>
<div style="position:absolute;left:765.1px;top:89.0px;width:7.0px;height:7.0px;background:radial-gradient(circle at 50% 40%,#74c850 0%,#44a828 60%,#2c8c18 100%);border-radius:50%;box-shadow:0 0 0 0.3px #2a8218;"><div style="position:absolute;left:0;top:0.9px;width:7px;text-align:center;font-size:5.6px;line-height:5.6px;font-weight:bold;color:rgba(220,255,210,0.6);">a</div></div>
<div style="position:absolute;left:776.8px;top:87.6px;font-size:8.8px;line-height:1;color:#727272;white-space:nowrap;width:36.60000000000002px;text-align:center;"><span style="display:inline-block;transform:scaleX(0.74);">19</span></div>
<div style="position:absolute;left:813.9px;top:87.6px;font-size:8.8px;line-height:1;color:#4070c8;white-space:nowrap;width:21.59999999999991px;text-align:center;"><span style="display:inline-block;transform:scaleX(0.74);text-decoration:underline;text-decoration-thickness:0.5px;text-underline-offset:0.1px;text-decoration-color:#6a90d8;">5</span></div>
<div style="position:absolute;left:835.0px;top:87.6px;font-size:8.8px;line-height:1;color:#4070c8;white-space:nowrap;width:22.0px;text-align:center;"><span style="display:inline-block;transform:scaleX(0.74);text-decoration:underline;text-decoration-thickness:0.5px;text-underline-offset:0.1px;text-decoration-color:#6a90d8;">999</span></div>
<div style="position:absolute;left:857.2px;top:87.6px;font-size:8.8px;line-height:1;color:#727272;white-space:nowrap;width:36.600000000000136px;text-align:center;"><span style="display:inline-block;transform:scaleX(0.74);">3</span></div>
<div style="position:absolute;left:62.1px;top:103.8px;width:7.0px;height:7.0px;background:radial-gradient(circle at 50% 40%,#74c850 0%,#44a828 60%,#2c8c18 100%);border-radius:50%;box-shadow:0 0 0 0.3px #2a8218;"><div style="position:absolute;left:0;top:0.9px;width:7px;text-align:center;font-size:5.6px;line-height:5.6px;font-weight:bold;color:rgba(220,255,210,0.6);">a</div></div>
<div style="position:absolute;left:74.1px;top:102.4px;font-size:8.8px;line-height:1;color:#727272;white-space:nowrap;width:36.20000000000002px;text-align:center;"><span style="display:inline-block;transform:scaleX(0.74);">0</span></div>
<div style="position:absolute;left:109.9px;top:102.4px;font-size:8.8px;line-height:1;color:#4070c8;white-space:nowrap;width:21.19999999999999px;text-align:center;"><span style="display:inline-block;transform:scaleX(0.74);text-decoration:underline;text-decoration-thickness:0.5px;text-underline-offset:0.1px;text-decoration-color:#6a90d8;">0</span></div>
<div style="position:absolute;left:129.7px;top:102.4px;font-size:8.8px;line-height:1;color:#4070c8;white-space:nowrap;width:19.0px;text-align:center;"><span style="display:inline-block;transform:scaleX(0.74);text-decoration:underline;text-decoration-thickness:0.5px;text-underline-offset:0.1px;text-decoration-color:#6a90d8;">1</span></div>
<div style="position:absolute;left:149.9px;top:102.4px;font-size:8.8px;line-height:1;color:#727272;white-space:nowrap;width:36.19999999999999px;text-align:center;"><span style="display:inline-block;transform:scaleX(0.74);">0</span></div>
<div style="position:absolute;left:236.8px;top:103.8px;width:7.0px;height:7.0px;background:radial-gradient(circle at 50% 40%,#74c850 0%,#44a828 60%,#2c8c18 100%);border-radius:50%;box-shadow:0 0 0 0.3px #2a8218;"><div style="position:absolute;left:0;top:0.9px;width:7px;text-align:center;font-size:5.6px;line-height:5.6px;font-weight:bold;color:rgba(220,255,210,0.6);">a</div></div>
<div style="position:absolute;left:248.8px;top:102.4px;font-size:8.8px;line-height:1;color:#727272;white-space:nowrap;width:37.0px;text-align:center;"><span style="display:inline-block;transform:scaleX(0.74);">0</span></div>
<div style="position:absolute;left:285.4px;top:102.4px;font-size:8.8px;line-height:1;color:#4070c8;white-space:nowrap;width:20.69999999999999px;text-align:center;"><span style="display:inline-block;transform:scaleX(0.74);text-decoration:underline;text-decoration-thickness:0.5px;text-underline-offset:0.1px;text-decoration-color:#6a90d8;">0</span></div>
<div style="position:absolute;left:304.7px;top:102.4px;font-size:8.8px;line-height:1;color:#4070c8;white-space:nowrap;width:19.0px;text-align:center;"><span style="display:inline-block;transform:scaleX(0.74);text-decoration:underline;text-decoration-thickness:0.5px;text-underline-offset:0.1px;text-decoration-color:#6a90d8;">1</span></div>
<div style="position:absolute;left:324.9px;top:102.4px;font-size:8.8px;line-height:1;color:#727272;white-space:nowrap;width:36.69999999999999px;text-align:center;"><span style="display:inline-block;transform:scaleX(0.74);">0</span></div>
<div style="position:absolute;left:412.0px;top:103.8px;width:7.0px;height:7.0px;background:radial-gradient(circle at 50% 40%,#74c850 0%,#44a828 60%,#2c8c18 100%);border-radius:50%;box-shadow:0 0 0 0.3px #2a8218;"><div style="position:absolute;left:0;top:0.9px;width:7px;text-align:center;font-size:5.6px;line-height:5.6px;font-weight:bold;color:rgba(220,255,210,0.6);">a</div></div>
<div style="position:absolute;left:424.0px;top:102.4px;font-size:8.8px;line-height:1;color:#727272;white-space:nowrap;width:36.799999999999955px;text-align:center;"><span style="display:inline-block;transform:scaleX(0.74);">0</span></div>
<div style="position:absolute;left:460.4px;top:102.4px;font-size:8.8px;line-height:1;color:#4070c8;white-space:nowrap;width:20.700000000000045px;text-align:center;"><span style="display:inline-block;transform:scaleX(0.74);text-decoration:underline;text-decoration-thickness:0.5px;text-underline-offset:0.1px;text-decoration-color:#6a90d8;">0</span></div>
<div style="position:absolute;left:479.7px;top:102.4px;font-size:8.8px;line-height:1;color:#4070c8;white-space:nowrap;width:19.0px;text-align:center;"><span style="display:inline-block;transform:scaleX(0.74);text-decoration:underline;text-decoration-thickness:0.5px;text-underline-offset:0.1px;text-decoration-color:#6a90d8;">1</span></div>
<div style="position:absolute;left:499.9px;top:102.4px;font-size:8.8px;line-height:1;color:#727272;white-space:nowrap;width:36.700000000000045px;text-align:center;"><span style="display:inline-block;transform:scaleX(0.74);">0</span></div>
<div style="position:absolute;left:586.95px;top:103.8px;width:7.0px;height:7.0px;background:radial-gradient(circle at 50% 40%,#74c850 0%,#44a828 60%,#2c8c18 100%);border-radius:50%;box-shadow:0 0 0 0.3px #2a8218;"><div style="position:absolute;left:0;top:0.9px;width:7px;text-align:center;font-size:5.6px;line-height:5.6px;font-weight:bold;color:rgba(220,255,210,0.6);">a</div></div>
<div style="position:absolute;left:598.5px;top:102.4px;font-size:8.8px;line-height:1;color:#727272;white-space:nowrap;width:37.0px;text-align:center;"><span style="display:inline-block;transform:scaleX(0.74);">5</span></div>
<div style="position:absolute;left:636.0px;top:102.4px;font-size:8.8px;line-height:1;color:#4070c8;white-space:nowrap;width:20.700000000000045px;text-align:center;"><span style="display:inline-block;transform:scaleX(0.74);text-decoration:underline;text-decoration-thickness:0.5px;text-underline-offset:0.1px;text-decoration-color:#6a90d8;">2</span></div>
<div style="position:absolute;left:656.2px;top:102.4px;font-size:8.8px;line-height:1;color:#4070c8;white-space:nowrap;width:22.0px;text-align:center;"><span style="display:inline-block;transform:scaleX(0.74);text-decoration:underline;text-decoration-thickness:0.5px;text-underline-offset:0.1px;text-decoration-color:#6a90d8;">999</span></div>
<div style="position:absolute;left:678.4px;top:102.4px;font-size:8.8px;line-height:1;color:#727272;white-space:nowrap;width:36.60000000000002px;text-align:center;"><span style="display:inline-block;transform:scaleX(0.74);">3</span></div>
<div style="position:absolute;left:765.1px;top:103.8px;width:7.0px;height:7.0px;background:radial-gradient(circle at 50% 40%,#74c850 0%,#44a828 60%,#2c8c18 100%);border-radius:50%;box-shadow:0 0 0 0.3px #2a8218;"><div style="position:absolute;left:0;top:0.9px;width:7px;text-align:center;font-size:5.6px;line-height:5.6px;font-weight:bold;color:rgba(220,255,210,0.6);">a</div></div>
<div style="position:absolute;left:776.8px;top:102.4px;font-size:8.8px;line-height:1;color:#727272;white-space:nowrap;width:36.60000000000002px;text-align:center;"><span style="display:inline-block;transform:scaleX(0.74);">18</span></div>
<div style="position:absolute;left:813.9px;top:102.4px;font-size:8.8px;line-height:1;color:#4070c8;white-space:nowrap;width:21.59999999999991px;text-align:center;"><span style="display:inline-block;transform:scaleX(0.74);text-decoration:underline;text-decoration-thickness:0.5px;text-underline-offset:0.1px;text-decoration-color:#6a90d8;">5</span></div>
<div style="position:absolute;left:835.0px;top:102.4px;font-size:8.8px;line-height:1;color:#4070c8;white-space:nowrap;width:22.0px;text-align:center;"><span style="display:inline-block;transform:scaleX(0.74);text-decoration:underline;text-decoration-thickness:0.5px;text-underline-offset:0.1px;text-decoration-color:#6a90d8;">999</span></div>
<div style="position:absolute;left:857.2px;top:102.4px;font-size:8.8px;line-height:1;color:#727272;white-space:nowrap;width:36.600000000000136px;text-align:center;"><span style="display:inline-block;transform:scaleX(0.74);">3</span></div>
<div style="position:absolute;left:62.1px;top:118.6px;width:7.0px;height:7.0px;background:radial-gradient(circle at 50% 40%,#74c850 0%,#44a828 60%,#2c8c18 100%);border-radius:50%;box-shadow:0 0 0 0.3px #2a8218;"><div style="position:absolute;left:0;top:0.9px;width:7px;text-align:center;font-size:5.6px;line-height:5.6px;font-weight:bold;color:rgba(220,255,210,0.6);">a</div></div>
<div style="position:absolute;left:74.1px;top:117.2px;font-size:8.8px;line-height:1;color:#727272;white-space:nowrap;width:36.20000000000002px;text-align:center;"><span style="display:inline-block;transform:scaleX(0.74);">0</span></div>
<div style="position:absolute;left:109.9px;top:117.2px;font-size:8.8px;line-height:1;color:#4070c8;white-space:nowrap;width:21.19999999999999px;text-align:center;"><span style="display:inline-block;transform:scaleX(0.74);text-decoration:underline;text-decoration-thickness:0.5px;text-underline-offset:0.1px;text-decoration-color:#6a90d8;">0</span></div>
<div style="position:absolute;left:129.7px;top:117.2px;font-size:8.8px;line-height:1;color:#4070c8;white-space:nowrap;width:19.0px;text-align:center;"><span style="display:inline-block;transform:scaleX(0.74);text-decoration:underline;text-decoration-thickness:0.5px;text-underline-offset:0.1px;text-decoration-color:#6a90d8;">1</span></div>
<div style="position:absolute;left:149.9px;top:117.2px;font-size:8.8px;line-height:1;color:#727272;white-space:nowrap;width:36.19999999999999px;text-align:center;"><span style="display:inline-block;transform:scaleX(0.74);">0</span></div>
<div style="position:absolute;left:236.8px;top:118.6px;width:7.0px;height:7.0px;background:radial-gradient(circle at 50% 40%,#74c850 0%,#44a828 60%,#2c8c18 100%);border-radius:50%;box-shadow:0 0 0 0.3px #2a8218;"><div style="position:absolute;left:0;top:0.9px;width:7px;text-align:center;font-size:5.6px;line-height:5.6px;font-weight:bold;color:rgba(220,255,210,0.6);">a</div></div>
<div style="position:absolute;left:248.8px;top:117.2px;font-size:8.8px;line-height:1;color:#727272;white-space:nowrap;width:37.0px;text-align:center;"><span style="display:inline-block;transform:scaleX(0.74);">0</span></div>
<div style="position:absolute;left:285.4px;top:117.2px;font-size:8.8px;line-height:1;color:#4070c8;white-space:nowrap;width:20.69999999999999px;text-align:center;"><span style="display:inline-block;transform:scaleX(0.74);text-decoration:underline;text-decoration-thickness:0.5px;text-underline-offset:0.1px;text-decoration-color:#6a90d8;">0</span></div>
<div style="position:absolute;left:304.7px;top:117.2px;font-size:8.8px;line-height:1;color:#4070c8;white-space:nowrap;width:19.0px;text-align:center;"><span style="display:inline-block;transform:scaleX(0.74);text-decoration:underline;text-decoration-thickness:0.5px;text-underline-offset:0.1px;text-decoration-color:#6a90d8;">1</span></div>
<div style="position:absolute;left:324.9px;top:117.2px;font-size:8.8px;line-height:1;color:#727272;white-space:nowrap;width:36.69999999999999px;text-align:center;"><span style="display:inline-block;transform:scaleX(0.74);">0</span></div>
<div style="position:absolute;left:412.0px;top:118.6px;width:7.0px;height:7.0px;background:radial-gradient(circle at 50% 40%,#74c850 0%,#44a828 60%,#2c8c18 100%);border-radius:50%;box-shadow:0 0 0 0.3px #2a8218;"><div style="position:absolute;left:0;top:0.9px;width:7px;text-align:center;font-size:5.6px;line-height:5.6px;font-weight:bold;color:rgba(220,255,210,0.6);">a</div></div>
<div style="position:absolute;left:424.0px;top:117.2px;font-size:8.8px;line-height:1;color:#727272;white-space:nowrap;width:36.799999999999955px;text-align:center;"><span style="display:inline-block;transform:scaleX(0.74);">0</span></div>
<div style="position:absolute;left:460.4px;top:117.2px;font-size:8.8px;line-height:1;color:#4070c8;white-space:nowrap;width:20.700000000000045px;text-align:center;"><span style="display:inline-block;transform:scaleX(0.74);text-decoration:underline;text-decoration-thickness:0.5px;text-underline-offset:0.1px;text-decoration-color:#6a90d8;">0</span></div>
<div style="position:absolute;left:479.7px;top:117.2px;font-size:8.8px;line-height:1;color:#4070c8;white-space:nowrap;width:19.0px;text-align:center;"><span style="display:inline-block;transform:scaleX(0.74);text-decoration:underline;text-decoration-thickness:0.5px;text-underline-offset:0.1px;text-decoration-color:#6a90d8;">1</span></div>
<div style="position:absolute;left:499.9px;top:117.2px;font-size:8.8px;line-height:1;color:#727272;white-space:nowrap;width:36.700000000000045px;text-align:center;"><span style="display:inline-block;transform:scaleX(0.74);">0</span></div>
<div style="position:absolute;left:586.95px;top:118.6px;width:7.0px;height:7.0px;background:radial-gradient(circle at 50% 40%,#74c850 0%,#44a828 60%,#2c8c18 100%);border-radius:50%;box-shadow:0 0 0 0.3px #2a8218;"><div style="position:absolute;left:0;top:0.9px;width:7px;text-align:center;font-size:5.6px;line-height:5.6px;font-weight:bold;color:rgba(220,255,210,0.6);">a</div></div>
<div style="position:absolute;left:598.5px;top:117.2px;font-size:8.8px;line-height:1;color:#727272;white-space:nowrap;width:37.0px;text-align:center;"><span style="display:inline-block;transform:scaleX(0.74);">5</span></div>
<div style="position:absolute;left:636.0px;top:117.2px;font-size:8.8px;line-height:1;color:#4070c8;white-space:nowrap;width:20.700000000000045px;text-align:center;"><span style="display:inline-block;transform:scaleX(0.74);text-decoration:underline;text-decoration-thickness:0.5px;text-underline-offset:0.1px;text-decoration-color:#6a90d8;">2</span></div>
<div style="position:absolute;left:656.2px;top:117.2px;font-size:8.8px;line-height:1;color:#4070c8;white-space:nowrap;width:22.0px;text-align:center;"><span style="display:inline-block;transform:scaleX(0.74);text-decoration:underline;text-decoration-thickness:0.5px;text-underline-offset:0.1px;text-decoration-color:#6a90d8;">999</span></div>
<div style="position:absolute;left:678.4px;top:117.2px;font-size:8.8px;line-height:1;color:#727272;white-space:nowrap;width:36.60000000000002px;text-align:center;"><span style="display:inline-block;transform:scaleX(0.74);">3</span></div>
<div style="position:absolute;left:765.1px;top:118.6px;width:7.0px;height:7.0px;background:radial-gradient(circle at 50% 40%,#74c850 0%,#44a828 60%,#2c8c18 100%);border-radius:50%;box-shadow:0 0 0 0.3px #2a8218;"><div style="position:absolute;left:0;top:0.9px;width:7px;text-align:center;font-size:5.6px;line-height:5.6px;font-weight:bold;color:rgba(220,255,210,0.6);">a</div></div>
<div style="position:absolute;left:776.8px;top:117.2px;font-size:8.8px;line-height:1;color:#727272;white-space:nowrap;width:36.60000000000002px;text-align:center;"><span style="display:inline-block;transform:scaleX(0.74);">18</span></div>
<div style="position:absolute;left:813.9px;top:117.2px;font-size:8.8px;line-height:1;color:#4070c8;white-space:nowrap;width:21.59999999999991px;text-align:center;"><span style="display:inline-block;transform:scaleX(0.74);text-decoration:underline;text-decoration-thickness:0.5px;text-underline-offset:0.1px;text-decoration-color:#6a90d8;">5</span></div>
<div style="position:absolute;left:835.0px;top:117.2px;font-size:8.8px;line-height:1;color:#4070c8;white-space:nowrap;width:22.0px;text-align:center;"><span style="display:inline-block;transform:scaleX(0.74);text-decoration:underline;text-decoration-thickness:0.5px;text-underline-offset:0.1px;text-decoration-color:#6a90d8;">999</span></div>
<div style="position:absolute;left:857.2px;top:117.2px;font-size:8.8px;line-height:1;color:#727272;white-space:nowrap;width:36.600000000000136px;text-align:center;"><span style="display:inline-block;transform:scaleX(0.74);">3</span></div>
<div style="position:absolute;left:62.1px;top:133.4px;width:7.0px;height:7.0px;background:radial-gradient(circle at 50% 40%,#74c850 0%,#44a828 60%,#2c8c18 100%);border-radius:50%;box-shadow:0 0 0 0.3px #2a8218;"><div style="position:absolute;left:0;top:0.9px;width:7px;text-align:center;font-size:5.6px;line-height:5.6px;font-weight:bold;color:rgba(220,255,210,0.6);">a</div></div>
<div style="position:absolute;left:74.1px;top:132.0px;font-size:8.8px;line-height:1;color:#727272;white-space:nowrap;width:36.20000000000002px;text-align:center;"><span style="display:inline-block;transform:scaleX(0.74);">0</span></div>
<div style="position:absolute;left:109.9px;top:132.0px;font-size:8.8px;line-height:1;color:#4070c8;white-space:nowrap;width:21.19999999999999px;text-align:center;"><span style="display:inline-block;transform:scaleX(0.74);text-decoration:underline;text-decoration-thickness:0.5px;text-underline-offset:0.1px;text-decoration-color:#6a90d8;">0</span></div>
<div style="position:absolute;left:129.7px;top:132.0px;font-size:8.8px;line-height:1;color:#4070c8;white-space:nowrap;width:19.0px;text-align:center;"><span style="display:inline-block;transform:scaleX(0.74);text-decoration:underline;text-decoration-thickness:0.5px;text-underline-offset:0.1px;text-decoration-color:#6a90d8;">1</span></div>
<div style="position:absolute;left:149.9px;top:132.0px;font-size:8.8px;line-height:1;color:#727272;white-space:nowrap;width:36.19999999999999px;text-align:center;"><span style="display:inline-block;transform:scaleX(0.74);">0</span></div>
<div style="position:absolute;left:236.8px;top:133.4px;width:7.0px;height:7.0px;background:radial-gradient(circle at 50% 40%,#74c850 0%,#44a828 60%,#2c8c18 100%);border-radius:50%;box-shadow:0 0 0 0.3px #2a8218;"><div style="position:absolute;left:0;top:0.9px;width:7px;text-align:center;font-size:5.6px;line-height:5.6px;font-weight:bold;color:rgba(220,255,210,0.6);">a</div></div>
<div style="position:absolute;left:248.8px;top:132.0px;font-size:8.8px;line-height:1;color:#727272;white-space:nowrap;width:37.0px;text-align:center;"><span style="display:inline-block;transform:scaleX(0.74);">0</span></div>
<div style="position:absolute;left:285.4px;top:132.0px;font-size:8.8px;line-height:1;color:#4070c8;white-space:nowrap;width:20.69999999999999px;text-align:center;"><span style="display:inline-block;transform:scaleX(0.74);text-decoration:underline;text-decoration-thickness:0.5px;text-underline-offset:0.1px;text-decoration-color:#6a90d8;">0</span></div>
<div style="position:absolute;left:304.7px;top:132.0px;font-size:8.8px;line-height:1;color:#4070c8;white-space:nowrap;width:19.0px;text-align:center;"><span style="display:inline-block;transform:scaleX(0.74);text-decoration:underline;text-decoration-thickness:0.5px;text-underline-offset:0.1px;text-decoration-color:#6a90d8;">1</span></div>
<div style="position:absolute;left:324.9px;top:132.0px;font-size:8.8px;line-height:1;color:#727272;white-space:nowrap;width:36.69999999999999px;text-align:center;"><span style="display:inline-block;transform:scaleX(0.74);">0</span></div>
<div style="position:absolute;left:412.0px;top:133.4px;width:7.0px;height:7.0px;background:radial-gradient(circle at 50% 40%,#74c850 0%,#44a828 60%,#2c8c18 100%);border-radius:50%;box-shadow:0 0 0 0.3px #2a8218;"><div style="position:absolute;left:0;top:0.9px;width:7px;text-align:center;font-size:5.6px;line-height:5.6px;font-weight:bold;color:rgba(220,255,210,0.6);">a</div></div>
<div style="position:absolute;left:424.0px;top:132.0px;font-size:8.8px;line-height:1;color:#727272;white-space:nowrap;width:36.799999999999955px;text-align:center;"><span style="display:inline-block;transform:scaleX(0.74);">0</span></div>
<div style="position:absolute;left:460.4px;top:132.0px;font-size:8.8px;line-height:1;color:#4070c8;white-space:nowrap;width:20.700000000000045px;text-align:center;"><span style="display:inline-block;transform:scaleX(0.74);text-decoration:underline;text-decoration-thickness:0.5px;text-underline-offset:0.1px;text-decoration-color:#6a90d8;">0</span></div>
<div style="position:absolute;left:479.7px;top:132.0px;font-size:8.8px;line-height:1;color:#4070c8;white-space:nowrap;width:19.0px;text-align:center;"><span style="display:inline-block;transform:scaleX(0.74);text-decoration:underline;text-decoration-thickness:0.5px;text-underline-offset:0.1px;text-decoration-color:#6a90d8;">1</span></div>
<div style="position:absolute;left:499.9px;top:132.0px;font-size:8.8px;line-height:1;color:#727272;white-space:nowrap;width:36.700000000000045px;text-align:center;"><span style="display:inline-block;transform:scaleX(0.74);">0</span></div>
<div style="position:absolute;left:586.95px;top:133.4px;width:7.0px;height:7.0px;background:radial-gradient(circle at 50% 40%,#74c850 0%,#44a828 60%,#2c8c18 100%);border-radius:50%;box-shadow:0 0 0 0.3px #2a8218;"><div style="position:absolute;left:0;top:0.9px;width:7px;text-align:center;font-size:5.6px;line-height:5.6px;font-weight:bold;color:rgba(220,255,210,0.6);">a</div></div>
<div style="position:absolute;left:598.5px;top:132.0px;font-size:8.8px;line-height:1;color:#727272;white-space:nowrap;width:37.0px;text-align:center;"><span style="display:inline-block;transform:scaleX(0.74);">5</span></div>
<div style="position:absolute;left:636.0px;top:132.0px;font-size:8.8px;line-height:1;color:#4070c8;white-space:nowrap;width:20.700000000000045px;text-align:center;"><span style="display:inline-block;transform:scaleX(0.74);text-decoration:underline;text-decoration-thickness:0.5px;text-underline-offset:0.1px;text-decoration-color:#6a90d8;">2</span></div>
<div style="position:absolute;left:656.2px;top:132.0px;font-size:8.8px;line-height:1;color:#4070c8;white-space:nowrap;width:22.0px;text-align:center;"><span style="display:inline-block;transform:scaleX(0.74);text-decoration:underline;text-decoration-thickness:0.5px;text-underline-offset:0.1px;text-decoration-color:#6a90d8;">999</span></div>
<div style="position:absolute;left:678.4px;top:132.0px;font-size:8.8px;line-height:1;color:#727272;white-space:nowrap;width:36.60000000000002px;text-align:center;"><span style="display:inline-block;transform:scaleX(0.74);">3</span></div>
<div style="position:absolute;left:765.1px;top:133.4px;width:7.0px;height:7.0px;background:radial-gradient(circle at 50% 40%,#74c850 0%,#44a828 60%,#2c8c18 100%);border-radius:50%;box-shadow:0 0 0 0.3px #2a8218;"><div style="position:absolute;left:0;top:0.9px;width:7px;text-align:center;font-size:5.6px;line-height:5.6px;font-weight:bold;color:rgba(220,255,210,0.6);">a</div></div>
<div style="position:absolute;left:776.8px;top:132.0px;font-size:8.8px;line-height:1;color:#727272;white-space:nowrap;width:36.60000000000002px;text-align:center;"><span style="display:inline-block;transform:scaleX(0.74);">18</span></div>
<div style="position:absolute;left:813.9px;top:132.0px;font-size:8.8px;line-height:1;color:#4070c8;white-space:nowrap;width:21.59999999999991px;text-align:center;"><span style="display:inline-block;transform:scaleX(0.74);text-decoration:underline;text-decoration-thickness:0.5px;text-underline-offset:0.1px;text-decoration-color:#6a90d8;">5</span></div>
<div style="position:absolute;left:835.0px;top:132.0px;font-size:8.8px;line-height:1;color:#4070c8;white-space:nowrap;width:22.0px;text-align:center;"><span style="display:inline-block;transform:scaleX(0.74);text-decoration:underline;text-decoration-thickness:0.5px;text-underline-offset:0.1px;text-decoration-color:#6a90d8;">999</span></div>
<div style="position:absolute;left:857.2px;top:132.0px;font-size:8.8px;line-height:1;color:#727272;white-space:nowrap;width:36.600000000000136px;text-align:center;"><span style="display:inline-block;transform:scaleX(0.74);">3</span></div>
<div style="position:absolute;left:62.1px;top:148.2px;width:7.0px;height:7.0px;background:radial-gradient(circle at 50% 40%,#74c850 0%,#44a828 60%,#2c8c18 100%);border-radius:50%;box-shadow:0 0 0 0.3px #2a8218;"><div style="position:absolute;left:0;top:0.9px;width:7px;text-align:center;font-size:5.6px;line-height:5.6px;font-weight:bold;color:rgba(220,255,210,0.6);">a</div></div>
<div style="position:absolute;left:74.1px;top:146.8px;font-size:8.8px;line-height:1;color:#727272;white-space:nowrap;width:36.20000000000002px;text-align:center;"><span style="display:inline-block;transform:scaleX(0.74);">0</span></div>
<div style="position:absolute;left:109.9px;top:146.8px;font-size:8.8px;line-height:1;color:#4070c8;white-space:nowrap;width:21.19999999999999px;text-align:center;"><span style="display:inline-block;transform:scaleX(0.74);text-decoration:underline;text-decoration-thickness:0.5px;text-underline-offset:0.1px;text-decoration-color:#6a90d8;">0</span></div>
<div style="position:absolute;left:129.7px;top:146.8px;font-size:8.8px;line-height:1;color:#4070c8;white-space:nowrap;width:19.0px;text-align:center;"><span style="display:inline-block;transform:scaleX(0.74);text-decoration:underline;text-decoration-thickness:0.5px;text-underline-offset:0.1px;text-decoration-color:#6a90d8;">1</span></div>
<div style="position:absolute;left:149.9px;top:146.8px;font-size:8.8px;line-height:1;color:#727272;white-space:nowrap;width:36.19999999999999px;text-align:center;"><span style="display:inline-block;transform:scaleX(0.74);">0</span></div>
<div style="position:absolute;left:236.8px;top:148.2px;width:7.0px;height:7.0px;background:radial-gradient(circle at 50% 40%,#74c850 0%,#44a828 60%,#2c8c18 100%);border-radius:50%;box-shadow:0 0 0 0.3px #2a8218;"><div style="position:absolute;left:0;top:0.9px;width:7px;text-align:center;font-size:5.6px;line-height:5.6px;font-weight:bold;color:rgba(220,255,210,0.6);">a</div></div>
<div style="position:absolute;left:248.8px;top:146.8px;font-size:8.8px;line-height:1;color:#727272;white-space:nowrap;width:37.0px;text-align:center;"><span style="display:inline-block;transform:scaleX(0.74);">0</span></div>
<div style="position:absolute;left:285.4px;top:146.8px;font-size:8.8px;line-height:1;color:#4070c8;white-space:nowrap;width:20.69999999999999px;text-align:center;"><span style="display:inline-block;transform:scaleX(0.74);text-decoration:underline;text-decoration-thickness:0.5px;text-underline-offset:0.1px;text-decoration-color:#6a90d8;">0</span></div>
<div style="position:absolute;left:304.7px;top:146.8px;font-size:8.8px;line-height:1;color:#4070c8;white-space:nowrap;width:19.0px;text-align:center;"><span style="display:inline-block;transform:scaleX(0.74);text-decoration:underline;text-decoration-thickness:0.5px;text-underline-offset:0.1px;text-decoration-color:#6a90d8;">1</span></div>
<div style="position:absolute;left:324.9px;top:146.8px;font-size:8.8px;line-height:1;color:#727272;white-space:nowrap;width:36.69999999999999px;text-align:center;"><span style="display:inline-block;transform:scaleX(0.74);">0</span></div>
<div style="position:absolute;left:412.0px;top:148.2px;width:7.0px;height:7.0px;background:radial-gradient(circle at 50% 40%,#74c850 0%,#44a828 60%,#2c8c18 100%);border-radius:50%;box-shadow:0 0 0 0.3px #2a8218;"><div style="position:absolute;left:0;top:0.9px;width:7px;text-align:center;font-size:5.6px;line-height:5.6px;font-weight:bold;color:rgba(220,255,210,0.6);">a</div></div>
<div style="position:absolute;left:424.0px;top:146.8px;font-size:8.8px;line-height:1;color:#727272;white-space:nowrap;width:36.799999999999955px;text-align:center;"><span style="display:inline-block;transform:scaleX(0.74);">0</span></div>
<div style="position:absolute;left:460.4px;top:146.8px;font-size:8.8px;line-height:1;color:#4070c8;white-space:nowrap;width:20.700000000000045px;text-align:center;"><span style="display:inline-block;transform:scaleX(0.74);text-decoration:underline;text-decoration-thickness:0.5px;text-underline-offset:0.1px;text-decoration-color:#6a90d8;">0</span></div>
<div style="position:absolute;left:479.7px;top:146.8px;font-size:8.8px;line-height:1;color:#4070c8;white-space:nowrap;width:19.0px;text-align:center;"><span style="display:inline-block;transform:scaleX(0.74);text-decoration:underline;text-decoration-thickness:0.5px;text-underline-offset:0.1px;text-decoration-color:#6a90d8;">1</span></div>
<div style="position:absolute;left:499.9px;top:146.8px;font-size:8.8px;line-height:1;color:#727272;white-space:nowrap;width:36.700000000000045px;text-align:center;"><span style="display:inline-block;transform:scaleX(0.74);">0</span></div>
<div style="position:absolute;left:586.95px;top:148.2px;width:7.0px;height:7.0px;background:radial-gradient(circle at 50% 40%,#74c850 0%,#44a828 60%,#2c8c18 100%);border-radius:50%;box-shadow:0 0 0 0.3px #2a8218;"><div style="position:absolute;left:0;top:0.9px;width:7px;text-align:center;font-size:5.6px;line-height:5.6px;font-weight:bold;color:rgba(220,255,210,0.6);">a</div></div>
<div style="position:absolute;left:598.5px;top:146.8px;font-size:8.8px;line-height:1;color:#727272;white-space:nowrap;width:37.0px;text-align:center;"><span style="display:inline-block;transform:scaleX(0.74);">5</span></div>
<div style="position:absolute;left:636.0px;top:146.8px;font-size:8.8px;line-height:1;color:#4070c8;white-space:nowrap;width:20.700000000000045px;text-align:center;"><span style="display:inline-block;transform:scaleX(0.74);text-decoration:underline;text-decoration-thickness:0.5px;text-underline-offset:0.1px;text-decoration-color:#6a90d8;">2</span></div>
<div style="position:absolute;left:656.2px;top:146.8px;font-size:8.8px;line-height:1;color:#4070c8;white-space:nowrap;width:22.0px;text-align:center;"><span style="display:inline-block;transform:scaleX(0.74);text-decoration:underline;text-decoration-thickness:0.5px;text-underline-offset:0.1px;text-decoration-color:#6a90d8;">999</span></div>
<div style="position:absolute;left:678.4px;top:146.8px;font-size:8.8px;line-height:1;color:#727272;white-space:nowrap;width:36.60000000000002px;text-align:center;"><span style="display:inline-block;transform:scaleX(0.74);">3</span></div>
<div style="position:absolute;left:765.1px;top:148.2px;width:7.0px;height:7.0px;background:radial-gradient(circle at 50% 40%,#74c850 0%,#44a828 60%,#2c8c18 100%);border-radius:50%;box-shadow:0 0 0 0.3px #2a8218;"><div style="position:absolute;left:0;top:0.9px;width:7px;text-align:center;font-size:5.6px;line-height:5.6px;font-weight:bold;color:rgba(220,255,210,0.6);">a</div></div>
<div style="position:absolute;left:776.8px;top:146.8px;font-size:8.8px;line-height:1;color:#727272;white-space:nowrap;width:36.60000000000002px;text-align:center;"><span style="display:inline-block;transform:scaleX(0.74);">18</span></div>
<div style="position:absolute;left:813.9px;top:146.8px;font-size:8.8px;line-height:1;color:#4070c8;white-space:nowrap;width:21.59999999999991px;text-align:center;"><span style="display:inline-block;transform:scaleX(0.74);text-decoration:underline;text-decoration-thickness:0.5px;text-underline-offset:0.1px;text-decoration-color:#6a90d8;">5</span></div>
<div style="position:absolute;left:835.0px;top:146.8px;font-size:8.8px;line-height:1;color:#4070c8;white-space:nowrap;width:22.0px;text-align:center;"><span style="display:inline-block;transform:scaleX(0.74);text-decoration:underline;text-decoration-thickness:0.5px;text-underline-offset:0.1px;text-decoration-color:#6a90d8;">999</span></div>
<div style="position:absolute;left:857.2px;top:146.8px;font-size:8.8px;line-height:1;color:#727272;white-space:nowrap;width:36.600000000000136px;text-align:center;"><span style="display:inline-block;transform:scaleX(0.74);">3</span></div>
<div style="position:absolute;left:62.1px;top:163.0px;width:7.0px;height:7.0px;background:radial-gradient(circle at 50% 40%,#74c850 0%,#44a828 60%,#2c8c18 100%);border-radius:50%;box-shadow:0 0 0 0.3px #2a8218;"><div style="position:absolute;left:0;top:0.9px;width:7px;text-align:center;font-size:5.6px;line-height:5.6px;font-weight:bold;color:rgba(220,255,210,0.6);">a</div></div>
<div style="position:absolute;left:74.1px;top:161.6px;font-size:8.8px;line-height:1;color:#727272;white-space:nowrap;width:36.20000000000002px;text-align:center;"><span style="display:inline-block;transform:scaleX(0.74);">0</span></div>
<div style="position:absolute;left:109.9px;top:161.6px;font-size:8.8px;line-height:1;color:#4070c8;white-space:nowrap;width:21.19999999999999px;text-align:center;"><span style="display:inline-block;transform:scaleX(0.74);text-decoration:underline;text-decoration-thickness:0.5px;text-underline-offset:0.1px;text-decoration-color:#6a90d8;">0</span></div>
<div style="position:absolute;left:129.7px;top:161.6px;font-size:8.8px;line-height:1;color:#4070c8;white-space:nowrap;width:19.0px;text-align:center;"><span style="display:inline-block;transform:scaleX(0.74);text-decoration:underline;text-decoration-thickness:0.5px;text-underline-offset:0.1px;text-decoration-color:#6a90d8;">1</span></div>
<div style="position:absolute;left:149.9px;top:161.6px;font-size:8.8px;line-height:1;color:#727272;white-space:nowrap;width:36.19999999999999px;text-align:center;"><span style="display:inline-block;transform:scaleX(0.74);">0</span></div>
<div style="position:absolute;left:236.8px;top:163.0px;width:7.0px;height:7.0px;background:radial-gradient(circle at 50% 40%,#74c850 0%,#44a828 60%,#2c8c18 100%);border-radius:50%;box-shadow:0 0 0 0.3px #2a8218;"><div style="position:absolute;left:0;top:0.9px;width:7px;text-align:center;font-size:5.6px;line-height:5.6px;font-weight:bold;color:rgba(220,255,210,0.6);">a</div></div>
<div style="position:absolute;left:248.8px;top:161.6px;font-size:8.8px;line-height:1;color:#727272;white-space:nowrap;width:37.0px;text-align:center;"><span style="display:inline-block;transform:scaleX(0.74);">0</span></div>
<div style="position:absolute;left:285.4px;top:161.6px;font-size:8.8px;line-height:1;color:#4070c8;white-space:nowrap;width:20.69999999999999px;text-align:center;"><span style="display:inline-block;transform:scaleX(0.74);text-decoration:underline;text-decoration-thickness:0.5px;text-underline-offset:0.1px;text-decoration-color:#6a90d8;">0</span></div>
<div style="position:absolute;left:304.7px;top:161.6px;font-size:8.8px;line-height:1;color:#4070c8;white-space:nowrap;width:19.0px;text-align:center;"><span style="display:inline-block;transform:scaleX(0.74);text-decoration:underline;text-decoration-thickness:0.5px;text-underline-offset:0.1px;text-decoration-color:#6a90d8;">1</span></div>
<div style="position:absolute;left:324.9px;top:161.6px;font-size:8.8px;line-height:1;color:#727272;white-space:nowrap;width:36.69999999999999px;text-align:center;"><span style="display:inline-block;transform:scaleX(0.74);">0</span></div>
<div style="position:absolute;left:412.0px;top:163.0px;width:7.0px;height:7.0px;background:radial-gradient(circle at 50% 40%,#74c850 0%,#44a828 60%,#2c8c18 100%);border-radius:50%;box-shadow:0 0 0 0.3px #2a8218;"><div style="position:absolute;left:0;top:0.9px;width:7px;text-align:center;font-size:5.6px;line-height:5.6px;font-weight:bold;color:rgba(220,255,210,0.6);">a</div></div>
<div style="position:absolute;left:424.0px;top:161.6px;font-size:8.8px;line-height:1;color:#727272;white-space:nowrap;width:36.799999999999955px;text-align:center;"><span style="display:inline-block;transform:scaleX(0.74);">0</span></div>
<div style="position:absolute;left:460.4px;top:161.6px;font-size:8.8px;line-height:1;color:#4070c8;white-space:nowrap;width:20.700000000000045px;text-align:center;"><span style="display:inline-block;transform:scaleX(0.74);text-decoration:underline;text-decoration-thickness:0.5px;text-underline-offset:0.1px;text-decoration-color:#6a90d8;">0</span></div>
<div style="position:absolute;left:479.7px;top:161.6px;font-size:8.8px;line-height:1;color:#4070c8;white-space:nowrap;width:19.0px;text-align:center;"><span style="display:inline-block;transform:scaleX(0.74);text-decoration:underline;text-decoration-thickness:0.5px;text-underline-offset:0.1px;text-decoration-color:#6a90d8;">1</span></div>
<div style="position:absolute;left:499.9px;top:161.6px;font-size:8.8px;line-height:1;color:#727272;white-space:nowrap;width:36.700000000000045px;text-align:center;"><span style="display:inline-block;transform:scaleX(0.74);">0</span></div>
<div style="position:absolute;left:586.95px;top:163.0px;width:7.0px;height:7.0px;background:radial-gradient(circle at 50% 40%,#74c850 0%,#44a828 60%,#2c8c18 100%);border-radius:50%;box-shadow:0 0 0 0.3px #2a8218;"><div style="position:absolute;left:0;top:0.9px;width:7px;text-align:center;font-size:5.6px;line-height:5.6px;font-weight:bold;color:rgba(220,255,210,0.6);">a</div></div>
<div style="position:absolute;left:598.5px;top:161.6px;font-size:8.8px;line-height:1;color:#727272;white-space:nowrap;width:37.0px;text-align:center;"><span style="display:inline-block;transform:scaleX(0.74);">5</span></div>
<div style="position:absolute;left:636.0px;top:161.6px;font-size:8.8px;line-height:1;color:#4070c8;white-space:nowrap;width:20.700000000000045px;text-align:center;"><span style="display:inline-block;transform:scaleX(0.74);text-decoration:underline;text-decoration-thickness:0.5px;text-underline-offset:0.1px;text-decoration-color:#6a90d8;">2</span></div>
<div style="position:absolute;left:656.2px;top:161.6px;font-size:8.8px;line-height:1;color:#4070c8;white-space:nowrap;width:22.0px;text-align:center;"><span style="display:inline-block;transform:scaleX(0.74);text-decoration:underline;text-decoration-thickness:0.5px;text-underline-offset:0.1px;text-decoration-color:#6a90d8;">999</span></div>
<div style="position:absolute;left:678.4px;top:161.6px;font-size:8.8px;line-height:1;color:#727272;white-space:nowrap;width:36.60000000000002px;text-align:center;"><span style="display:inline-block;transform:scaleX(0.74);">3</span></div>
<div style="position:absolute;left:765.1px;top:163.0px;width:7.0px;height:7.0px;background:radial-gradient(circle at 50% 40%,#74c850 0%,#44a828 60%,#2c8c18 100%);border-radius:50%;box-shadow:0 0 0 0.3px #2a8218;"><div style="position:absolute;left:0;top:0.9px;width:7px;text-align:center;font-size:5.6px;line-height:5.6px;font-weight:bold;color:rgba(220,255,210,0.6);">a</div></div>
<div style="position:absolute;left:776.8px;top:161.6px;font-size:8.8px;line-height:1;color:#727272;white-space:nowrap;width:36.60000000000002px;text-align:center;"><span style="display:inline-block;transform:scaleX(0.74);">18</span></div>
<div style="position:absolute;left:813.9px;top:161.6px;font-size:8.8px;line-height:1;color:#4070c8;white-space:nowrap;width:21.59999999999991px;text-align:center;"><span style="display:inline-block;transform:scaleX(0.74);text-decoration:underline;text-decoration-thickness:0.5px;text-underline-offset:0.1px;text-decoration-color:#6a90d8;">5</span></div>
<div style="position:absolute;left:835.0px;top:161.6px;font-size:8.8px;line-height:1;color:#4070c8;white-space:nowrap;width:22.0px;text-align:center;"><span style="display:inline-block;transform:scaleX(0.74);text-decoration:underline;text-decoration-thickness:0.5px;text-underline-offset:0.1px;text-decoration-color:#6a90d8;">999</span></div>
<div style="position:absolute;left:857.2px;top:161.6px;font-size:8.8px;line-height:1;color:#727272;white-space:nowrap;width:36.600000000000136px;text-align:center;"><span style="display:inline-block;transform:scaleX(0.74);">3</span></div>
<div style="position:absolute;left:62.1px;top:177.8px;width:7.0px;height:7.0px;background:radial-gradient(circle at 50% 40%,#74c850 0%,#44a828 60%,#2c8c18 100%);border-radius:50%;box-shadow:0 0 0 0.3px #2a8218;"><div style="position:absolute;left:0;top:0.9px;width:7px;text-align:center;font-size:5.6px;line-height:5.6px;font-weight:bold;color:rgba(220,255,210,0.6);">a</div></div>
<div style="position:absolute;left:74.1px;top:176.4px;font-size:8.8px;line-height:1;color:#727272;white-space:nowrap;width:36.20000000000002px;text-align:center;"><span style="display:inline-block;transform:scaleX(0.74);">0</span></div>
<div style="position:absolute;left:109.9px;top:176.4px;font-size:8.8px;line-height:1;color:#4070c8;white-space:nowrap;width:21.19999999999999px;text-align:center;"><span style="display:inline-block;transform:scaleX(0.74);text-decoration:underline;text-decoration-thickness:0.5px;text-underline-offset:0.1px;text-decoration-color:#6a90d8;">0</span></div>
<div style="position:absolute;left:129.7px;top:176.4px;font-size:8.8px;line-height:1;color:#4070c8;white-space:nowrap;width:19.0px;text-align:center;"><span style="display:inline-block;transform:scaleX(0.74);text-decoration:underline;text-decoration-thickness:0.5px;text-underline-offset:0.1px;text-decoration-color:#6a90d8;">1</span></div>
<div style="position:absolute;left:149.9px;top:176.4px;font-size:8.8px;line-height:1;color:#727272;white-space:nowrap;width:36.19999999999999px;text-align:center;"><span style="display:inline-block;transform:scaleX(0.74);">0</span></div>
<div style="position:absolute;left:236.8px;top:177.8px;width:7.0px;height:7.0px;background:radial-gradient(circle at 50% 40%,#74c850 0%,#44a828 60%,#2c8c18 100%);border-radius:50%;box-shadow:0 0 0 0.3px #2a8218;"><div style="position:absolute;left:0;top:0.9px;width:7px;text-align:center;font-size:5.6px;line-height:5.6px;font-weight:bold;color:rgba(220,255,210,0.6);">a</div></div>
<div style="position:absolute;left:248.8px;top:176.4px;font-size:8.8px;line-height:1;color:#727272;white-space:nowrap;width:37.0px;text-align:center;"><span style="display:inline-block;transform:scaleX(0.74);">0</span></div>
<div style="position:absolute;left:285.4px;top:176.4px;font-size:8.8px;line-height:1;color:#4070c8;white-space:nowrap;width:20.69999999999999px;text-align:center;"><span style="display:inline-block;transform:scaleX(0.74);text-decoration:underline;text-decoration-thickness:0.5px;text-underline-offset:0.1px;text-decoration-color:#6a90d8;">0</span></div>
<div style="position:absolute;left:304.7px;top:176.4px;font-size:8.8px;line-height:1;color:#4070c8;white-space:nowrap;width:19.0px;text-align:center;"><span style="display:inline-block;transform:scaleX(0.74);text-decoration:underline;text-decoration-thickness:0.5px;text-underline-offset:0.1px;text-decoration-color:#6a90d8;">1</span></div>
<div style="position:absolute;left:324.9px;top:176.4px;font-size:8.8px;line-height:1;color:#727272;white-space:nowrap;width:36.69999999999999px;text-align:center;"><span style="display:inline-block;transform:scaleX(0.74);">0</span></div>
<div style="position:absolute;left:412.0px;top:177.8px;width:7.0px;height:7.0px;background:radial-gradient(circle at 50% 40%,#74c850 0%,#44a828 60%,#2c8c18 100%);border-radius:50%;box-shadow:0 0 0 0.3px #2a8218;"><div style="position:absolute;left:0;top:0.9px;width:7px;text-align:center;font-size:5.6px;line-height:5.6px;font-weight:bold;color:rgba(220,255,210,0.6);">a</div></div>
<div style="position:absolute;left:424.0px;top:176.4px;font-size:8.8px;line-height:1;color:#727272;white-space:nowrap;width:36.799999999999955px;text-align:center;"><span style="display:inline-block;transform:scaleX(0.74);">0</span></div>
<div style="position:absolute;left:460.4px;top:176.4px;font-size:8.8px;line-height:1;color:#4070c8;white-space:nowrap;width:20.700000000000045px;text-align:center;"><span style="display:inline-block;transform:scaleX(0.74);text-decoration:underline;text-decoration-thickness:0.5px;text-underline-offset:0.1px;text-decoration-color:#6a90d8;">0</span></div>
<div style="position:absolute;left:479.7px;top:176.4px;font-size:8.8px;line-height:1;color:#4070c8;white-space:nowrap;width:19.0px;text-align:center;"><span style="display:inline-block;transform:scaleX(0.74);text-decoration:underline;text-decoration-thickness:0.5px;text-underline-offset:0.1px;text-decoration-color:#6a90d8;">1</span></div>
<div style="position:absolute;left:499.9px;top:176.4px;font-size:8.8px;line-height:1;color:#727272;white-space:nowrap;width:36.700000000000045px;text-align:center;"><span style="display:inline-block;transform:scaleX(0.74);">0</span></div>
<div style="position:absolute;left:586.95px;top:177.8px;width:7.0px;height:7.0px;background:radial-gradient(circle at 50% 40%,#74c850 0%,#44a828 60%,#2c8c18 100%);border-radius:50%;box-shadow:0 0 0 0.3px #2a8218;"><div style="position:absolute;left:0;top:0.9px;width:7px;text-align:center;font-size:5.6px;line-height:5.6px;font-weight:bold;color:rgba(220,255,210,0.6);">a</div></div>
<div style="position:absolute;left:598.5px;top:176.4px;font-size:8.8px;line-height:1;color:#727272;white-space:nowrap;width:37.0px;text-align:center;"><span style="display:inline-block;transform:scaleX(0.74);">5</span></div>
<div style="position:absolute;left:636.0px;top:176.4px;font-size:8.8px;line-height:1;color:#4070c8;white-space:nowrap;width:20.700000000000045px;text-align:center;"><span style="display:inline-block;transform:scaleX(0.74);text-decoration:underline;text-decoration-thickness:0.5px;text-underline-offset:0.1px;text-decoration-color:#6a90d8;">2</span></div>
<div style="position:absolute;left:656.2px;top:176.4px;font-size:8.8px;line-height:1;color:#4070c8;white-space:nowrap;width:22.0px;text-align:center;"><span style="display:inline-block;transform:scaleX(0.74);text-decoration:underline;text-decoration-thickness:0.5px;text-underline-offset:0.1px;text-decoration-color:#6a90d8;">999</span></div>
<div style="position:absolute;left:678.4px;top:176.4px;font-size:8.8px;line-height:1;color:#727272;white-space:nowrap;width:36.60000000000002px;text-align:center;"><span style="display:inline-block;transform:scaleX(0.74);">3</span></div>
<div style="position:absolute;left:765.1px;top:177.8px;width:7.0px;height:7.0px;background:radial-gradient(circle at 50% 40%,#74c850 0%,#44a828 60%,#2c8c18 100%);border-radius:50%;box-shadow:0 0 0 0.3px #2a8218;"><div style="position:absolute;left:0;top:0.9px;width:7px;text-align:center;font-size:5.6px;line-height:5.6px;font-weight:bold;color:rgba(220,255,210,0.6);">a</div></div>
<div style="position:absolute;left:776.8px;top:176.4px;font-size:8.8px;line-height:1;color:#727272;white-space:nowrap;width:36.60000000000002px;text-align:center;"><span style="display:inline-block;transform:scaleX(0.74);">18</span></div>
<div style="position:absolute;left:813.9px;top:176.4px;font-size:8.8px;line-height:1;color:#4070c8;white-space:nowrap;width:21.59999999999991px;text-align:center;"><span style="display:inline-block;transform:scaleX(0.74);text-decoration:underline;text-decoration-thickness:0.5px;text-underline-offset:0.1px;text-decoration-color:#6a90d8;">5</span></div>
<div style="position:absolute;left:835.0px;top:176.4px;font-size:8.8px;line-height:1;color:#4070c8;white-space:nowrap;width:22.0px;text-align:center;"><span style="display:inline-block;transform:scaleX(0.74);text-decoration:underline;text-decoration-thickness:0.5px;text-underline-offset:0.1px;text-decoration-color:#6a90d8;">999</span></div>
<div style="position:absolute;left:857.2px;top:176.4px;font-size:8.8px;line-height:1;color:#727272;white-space:nowrap;width:36.600000000000136px;text-align:center;"><span style="display:inline-block;transform:scaleX(0.74);">3</span></div>
<div style="position:absolute;left:62.1px;top:192.6px;width:7.0px;height:7.0px;background:radial-gradient(circle at 50% 40%,#74c850 0%,#44a828 60%,#2c8c18 100%);border-radius:50%;box-shadow:0 0 0 0.3px #2a8218;"><div style="position:absolute;left:0;top:0.9px;width:7px;text-align:center;font-size:5.6px;line-height:5.6px;font-weight:bold;color:rgba(220,255,210,0.6);">a</div></div>
<div style="position:absolute;left:74.1px;top:191.2px;font-size:8.8px;line-height:1;color:#727272;white-space:nowrap;width:36.20000000000002px;text-align:center;"><span style="display:inline-block;transform:scaleX(0.74);">0</span></div>
<div style="position:absolute;left:109.9px;top:191.2px;font-size:8.8px;line-height:1;color:#4070c8;white-space:nowrap;width:21.19999999999999px;text-align:center;"><span style="display:inline-block;transform:scaleX(0.74);text-decoration:underline;text-decoration-thickness:0.5px;text-underline-offset:0.1px;text-decoration-color:#6a90d8;">0</span></div>
<div style="position:absolute;left:129.7px;top:191.2px;font-size:8.8px;line-height:1;color:#4070c8;white-space:nowrap;width:19.0px;text-align:center;"><span style="display:inline-block;transform:scaleX(0.74);text-decoration:underline;text-decoration-thickness:0.5px;text-underline-offset:0.1px;text-decoration-color:#6a90d8;">1</span></div>
<div style="position:absolute;left:149.9px;top:191.2px;font-size:8.8px;line-height:1;color:#727272;white-space:nowrap;width:36.19999999999999px;text-align:center;"><span style="display:inline-block;transform:scaleX(0.74);">0</span></div>
<div style="position:absolute;left:236.8px;top:192.6px;width:7.0px;height:7.0px;background:radial-gradient(circle at 50% 40%,#74c850 0%,#44a828 60%,#2c8c18 100%);border-radius:50%;box-shadow:0 0 0 0.3px #2a8218;"><div style="position:absolute;left:0;top:0.9px;width:7px;text-align:center;font-size:5.6px;line-height:5.6px;font-weight:bold;color:rgba(220,255,210,0.6);">a</div></div>
<div style="position:absolute;left:248.8px;top:191.2px;font-size:8.8px;line-height:1;color:#727272;white-space:nowrap;width:37.0px;text-align:center;"><span style="display:inline-block;transform:scaleX(0.74);">0</span></div>
<div style="position:absolute;left:285.4px;top:191.2px;font-size:8.8px;line-height:1;color:#4070c8;white-space:nowrap;width:20.69999999999999px;text-align:center;"><span style="display:inline-block;transform:scaleX(0.74);text-decoration:underline;text-decoration-thickness:0.5px;text-underline-offset:0.1px;text-decoration-color:#6a90d8;">0</span></div>
<div style="position:absolute;left:304.7px;top:191.2px;font-size:8.8px;line-height:1;color:#4070c8;white-space:nowrap;width:19.0px;text-align:center;"><span style="display:inline-block;transform:scaleX(0.74);text-decoration:underline;text-decoration-thickness:0.5px;text-underline-offset:0.1px;text-decoration-color:#6a90d8;">1</span></div>
<div style="position:absolute;left:324.9px;top:191.2px;font-size:8.8px;line-height:1;color:#727272;white-space:nowrap;width:36.69999999999999px;text-align:center;"><span style="display:inline-block;transform:scaleX(0.74);">0</span></div>
<div style="position:absolute;left:412.0px;top:192.6px;width:7.0px;height:7.0px;background:radial-gradient(circle at 50% 40%,#74c850 0%,#44a828 60%,#2c8c18 100%);border-radius:50%;box-shadow:0 0 0 0.3px #2a8218;"><div style="position:absolute;left:0;top:0.9px;width:7px;text-align:center;font-size:5.6px;line-height:5.6px;font-weight:bold;color:rgba(220,255,210,0.6);">a</div></div>
<div style="position:absolute;left:424.0px;top:191.2px;font-size:8.8px;line-height:1;color:#727272;white-space:nowrap;width:36.799999999999955px;text-align:center;"><span style="display:inline-block;transform:scaleX(0.74);">0</span></div>
<div style="position:absolute;left:460.4px;top:191.2px;font-size:8.8px;line-height:1;color:#4070c8;white-space:nowrap;width:20.700000000000045px;text-align:center;"><span style="display:inline-block;transform:scaleX(0.74);text-decoration:underline;text-decoration-thickness:0.5px;text-underline-offset:0.1px;text-decoration-color:#6a90d8;">0</span></div>
<div style="position:absolute;left:479.7px;top:191.2px;font-size:8.8px;line-height:1;color:#4070c8;white-space:nowrap;width:19.0px;text-align:center;"><span style="display:inline-block;transform:scaleX(0.74);text-decoration:underline;text-decoration-thickness:0.5px;text-underline-offset:0.1px;text-decoration-color:#6a90d8;">1</span></div>
<div style="position:absolute;left:499.9px;top:191.2px;font-size:8.8px;line-height:1;color:#727272;white-space:nowrap;width:36.700000000000045px;text-align:center;"><span style="display:inline-block;transform:scaleX(0.74);">0</span></div>
<div style="position:absolute;left:586.95px;top:192.6px;width:7.0px;height:7.0px;background:radial-gradient(circle at 50% 40%,#74c850 0%,#44a828 60%,#2c8c18 100%);border-radius:50%;box-shadow:0 0 0 0.3px #2a8218;"><div style="position:absolute;left:0;top:0.9px;width:7px;text-align:center;font-size:5.6px;line-height:5.6px;font-weight:bold;color:rgba(220,255,210,0.6);">a</div></div>
<div style="position:absolute;left:598.5px;top:191.2px;font-size:8.8px;line-height:1;color:#727272;white-space:nowrap;width:37.0px;text-align:center;"><span style="display:inline-block;transform:scaleX(0.74);">5</span></div>
<div style="position:absolute;left:636.0px;top:191.2px;font-size:8.8px;line-height:1;color:#4070c8;white-space:nowrap;width:20.700000000000045px;text-align:center;"><span style="display:inline-block;transform:scaleX(0.74);text-decoration:underline;text-decoration-thickness:0.5px;text-underline-offset:0.1px;text-decoration-color:#6a90d8;">2</span></div>
<div style="position:absolute;left:656.2px;top:191.2px;font-size:8.8px;line-height:1;color:#4070c8;white-space:nowrap;width:22.0px;text-align:center;"><span style="display:inline-block;transform:scaleX(0.74);text-decoration:underline;text-decoration-thickness:0.5px;text-underline-offset:0.1px;text-decoration-color:#6a90d8;">999</span></div>
<div style="position:absolute;left:678.4px;top:191.2px;font-size:8.8px;line-height:1;color:#727272;white-space:nowrap;width:36.60000000000002px;text-align:center;"><span style="display:inline-block;transform:scaleX(0.74);">3</span></div>
<div style="position:absolute;left:765.1px;top:192.6px;width:7.0px;height:7.0px;background:radial-gradient(circle at 50% 40%,#74c850 0%,#44a828 60%,#2c8c18 100%);border-radius:50%;box-shadow:0 0 0 0.3px #2a8218;"><div style="position:absolute;left:0;top:0.9px;width:7px;text-align:center;font-size:5.6px;line-height:5.6px;font-weight:bold;color:rgba(220,255,210,0.6);">a</div></div>
<div style="position:absolute;left:776.8px;top:191.2px;font-size:8.8px;line-height:1;color:#727272;white-space:nowrap;width:36.60000000000002px;text-align:center;"><span style="display:inline-block;transform:scaleX(0.74);">19</span></div>
<div style="position:absolute;left:813.9px;top:191.2px;font-size:8.8px;line-height:1;color:#4070c8;white-space:nowrap;width:21.59999999999991px;text-align:center;"><span style="display:inline-block;transform:scaleX(0.74);text-decoration:underline;text-decoration-thickness:0.5px;text-underline-offset:0.1px;text-decoration-color:#6a90d8;">5</span></div>
<div style="position:absolute;left:835.0px;top:191.2px;font-size:8.8px;line-height:1;color:#4070c8;white-space:nowrap;width:22.0px;text-align:center;"><span style="display:inline-block;transform:scaleX(0.74);text-decoration:underline;text-decoration-thickness:0.5px;text-underline-offset:0.1px;text-decoration-color:#6a90d8;">999</span></div>
<div style="position:absolute;left:857.2px;top:191.2px;font-size:8.8px;line-height:1;color:#727272;white-space:nowrap;width:36.600000000000136px;text-align:center;"><span style="display:inline-block;transform:scaleX(0.74);">3</span></div>
<div style="position:absolute;left:62.1px;top:207.4px;width:7.0px;height:7.0px;background:radial-gradient(circle at 50% 40%,#74c850 0%,#44a828 60%,#2c8c18 100%);border-radius:50%;box-shadow:0 0 0 0.3px #2a8218;"><div style="position:absolute;left:0;top:0.9px;width:7px;text-align:center;font-size:5.6px;line-height:5.6px;font-weight:bold;color:rgba(220,255,210,0.6);">a</div></div>
<div style="position:absolute;left:74.1px;top:206.0px;font-size:8.8px;line-height:1;color:#727272;white-space:nowrap;width:36.20000000000002px;text-align:center;"><span style="display:inline-block;transform:scaleX(0.74);">0</span></div>
<div style="position:absolute;left:109.9px;top:206.0px;font-size:8.8px;line-height:1;color:#4070c8;white-space:nowrap;width:21.19999999999999px;text-align:center;"><span style="display:inline-block;transform:scaleX(0.74);text-decoration:underline;text-decoration-thickness:0.5px;text-underline-offset:0.1px;text-decoration-color:#6a90d8;">0</span></div>
<div style="position:absolute;left:129.7px;top:206.0px;font-size:8.8px;line-height:1;color:#4070c8;white-space:nowrap;width:19.0px;text-align:center;"><span style="display:inline-block;transform:scaleX(0.74);text-decoration:underline;text-decoration-thickness:0.5px;text-underline-offset:0.1px;text-decoration-color:#6a90d8;">1</span></div>
<div style="position:absolute;left:149.9px;top:206.0px;font-size:8.8px;line-height:1;color:#727272;white-space:nowrap;width:36.19999999999999px;text-align:center;"><span style="display:inline-block;transform:scaleX(0.74);">0</span></div>
<div style="position:absolute;left:236.8px;top:207.4px;width:7.0px;height:7.0px;background:radial-gradient(circle at 50% 40%,#74c850 0%,#44a828 60%,#2c8c18 100%);border-radius:50%;box-shadow:0 0 0 0.3px #2a8218;"><div style="position:absolute;left:0;top:0.9px;width:7px;text-align:center;font-size:5.6px;line-height:5.6px;font-weight:bold;color:rgba(220,255,210,0.6);">a</div></div>
<div style="position:absolute;left:248.8px;top:206.0px;font-size:8.8px;line-height:1;color:#727272;white-space:nowrap;width:37.0px;text-align:center;"><span style="display:inline-block;transform:scaleX(0.74);">0</span></div>
<div style="position:absolute;left:285.4px;top:206.0px;font-size:8.8px;line-height:1;color:#4070c8;white-space:nowrap;width:20.69999999999999px;text-align:center;"><span style="display:inline-block;transform:scaleX(0.74);text-decoration:underline;text-decoration-thickness:0.5px;text-underline-offset:0.1px;text-decoration-color:#6a90d8;">0</span></div>
<div style="position:absolute;left:304.7px;top:206.0px;font-size:8.8px;line-height:1;color:#4070c8;white-space:nowrap;width:19.0px;text-align:center;"><span style="display:inline-block;transform:scaleX(0.74);text-decoration:underline;text-decoration-thickness:0.5px;text-underline-offset:0.1px;text-decoration-color:#6a90d8;">1</span></div>
<div style="position:absolute;left:324.9px;top:206.0px;font-size:8.8px;line-height:1;color:#727272;white-space:nowrap;width:36.69999999999999px;text-align:center;"><span style="display:inline-block;transform:scaleX(0.74);">0</span></div>
<div style="position:absolute;left:412.0px;top:207.4px;width:7.0px;height:7.0px;background:radial-gradient(circle at 50% 40%,#74c850 0%,#44a828 60%,#2c8c18 100%);border-radius:50%;box-shadow:0 0 0 0.3px #2a8218;"><div style="position:absolute;left:0;top:0.9px;width:7px;text-align:center;font-size:5.6px;line-height:5.6px;font-weight:bold;color:rgba(220,255,210,0.6);">a</div></div>
<div style="position:absolute;left:424.0px;top:206.0px;font-size:8.8px;line-height:1;color:#727272;white-space:nowrap;width:36.799999999999955px;text-align:center;"><span style="display:inline-block;transform:scaleX(0.74);">0</span></div>
<div style="position:absolute;left:460.4px;top:206.0px;font-size:8.8px;line-height:1;color:#4070c8;white-space:nowrap;width:20.700000000000045px;text-align:center;"><span style="display:inline-block;transform:scaleX(0.74);text-decoration:underline;text-decoration-thickness:0.5px;text-underline-offset:0.1px;text-decoration-color:#6a90d8;">0</span></div>
<div style="position:absolute;left:479.7px;top:206.0px;font-size:8.8px;line-height:1;color:#4070c8;white-space:nowrap;width:19.0px;text-align:center;"><span style="display:inline-block;transform:scaleX(0.74);text-decoration:underline;text-decoration-thickness:0.5px;text-underline-offset:0.1px;text-decoration-color:#6a90d8;">1</span></div>
<div style="position:absolute;left:499.9px;top:206.0px;font-size:8.8px;line-height:1;color:#727272;white-space:nowrap;width:36.700000000000045px;text-align:center;"><span style="display:inline-block;transform:scaleX(0.74);">0</span></div>
<div style="position:absolute;left:586.95px;top:207.4px;width:7.0px;height:7.0px;background:radial-gradient(circle at 50% 40%,#74c850 0%,#44a828 60%,#2c8c18 100%);border-radius:50%;box-shadow:0 0 0 0.3px #2a8218;"><div style="position:absolute;left:0;top:0.9px;width:7px;text-align:center;font-size:5.6px;line-height:5.6px;font-weight:bold;color:rgba(220,255,210,0.6);">a</div></div>
<div style="position:absolute;left:598.5px;top:206.0px;font-size:8.8px;line-height:1;color:#727272;white-space:nowrap;width:37.0px;text-align:center;"><span style="display:inline-block;transform:scaleX(0.74);">5</span></div>
<div style="position:absolute;left:636.0px;top:206.0px;font-size:8.8px;line-height:1;color:#4070c8;white-space:nowrap;width:20.700000000000045px;text-align:center;"><span style="display:inline-block;transform:scaleX(0.74);text-decoration:underline;text-decoration-thickness:0.5px;text-underline-offset:0.1px;text-decoration-color:#6a90d8;">2</span></div>
<div style="position:absolute;left:656.2px;top:206.0px;font-size:8.8px;line-height:1;color:#4070c8;white-space:nowrap;width:22.0px;text-align:center;"><span style="display:inline-block;transform:scaleX(0.74);text-decoration:underline;text-decoration-thickness:0.5px;text-underline-offset:0.1px;text-decoration-color:#6a90d8;">999</span></div>
<div style="position:absolute;left:678.4px;top:206.0px;font-size:8.8px;line-height:1;color:#727272;white-space:nowrap;width:36.60000000000002px;text-align:center;"><span style="display:inline-block;transform:scaleX(0.74);">3</span></div>
<div style="position:absolute;left:765.1px;top:207.4px;width:7.0px;height:7.0px;background:radial-gradient(circle at 50% 40%,#74c850 0%,#44a828 60%,#2c8c18 100%);border-radius:50%;box-shadow:0 0 0 0.3px #2a8218;"><div style="position:absolute;left:0;top:0.9px;width:7px;text-align:center;font-size:5.6px;line-height:5.6px;font-weight:bold;color:rgba(220,255,210,0.6);">a</div></div>
<div style="position:absolute;left:776.8px;top:206.0px;font-size:8.8px;line-height:1;color:#727272;white-space:nowrap;width:36.60000000000002px;text-align:center;"><span style="display:inline-block;transform:scaleX(0.74);">19</span></div>
<div style="position:absolute;left:813.9px;top:206.0px;font-size:8.8px;line-height:1;color:#4070c8;white-space:nowrap;width:21.59999999999991px;text-align:center;"><span style="display:inline-block;transform:scaleX(0.74);text-decoration:underline;text-decoration-thickness:0.5px;text-underline-offset:0.1px;text-decoration-color:#6a90d8;">5</span></div>
<div style="position:absolute;left:835.0px;top:206.0px;font-size:8.8px;line-height:1;color:#4070c8;white-space:nowrap;width:22.0px;text-align:center;"><span style="display:inline-block;transform:scaleX(0.74);text-decoration:underline;text-decoration-thickness:0.5px;text-underline-offset:0.1px;text-decoration-color:#6a90d8;">999</span></div>
<div style="position:absolute;left:857.2px;top:206.0px;font-size:8.8px;line-height:1;color:#727272;white-space:nowrap;width:36.600000000000136px;text-align:center;"><span style="display:inline-block;transform:scaleX(0.74);">3</span></div>
<div style="position:absolute;left:62.1px;top:222.2px;width:7.0px;height:7.0px;background:radial-gradient(circle at 50% 40%,#74c850 0%,#44a828 60%,#2c8c18 100%);border-radius:50%;box-shadow:0 0 0 0.3px #2a8218;"><div style="position:absolute;left:0;top:0.9px;width:7px;text-align:center;font-size:5.6px;line-height:5.6px;font-weight:bold;color:rgba(220,255,210,0.6);">a</div></div>
<div style="position:absolute;left:74.1px;top:220.8px;font-size:8.8px;line-height:1;color:#727272;white-space:nowrap;width:36.20000000000002px;text-align:center;"><span style="display:inline-block;transform:scaleX(0.74);">0</span></div>
<div style="position:absolute;left:109.9px;top:220.8px;font-size:8.8px;line-height:1;color:#4070c8;white-space:nowrap;width:21.19999999999999px;text-align:center;"><span style="display:inline-block;transform:scaleX(0.74);text-decoration:underline;text-decoration-thickness:0.5px;text-underline-offset:0.1px;text-decoration-color:#6a90d8;">0</span></div>
<div style="position:absolute;left:129.7px;top:220.8px;font-size:8.8px;line-height:1;color:#4070c8;white-space:nowrap;width:19.0px;text-align:center;"><span style="display:inline-block;transform:scaleX(0.74);text-decoration:underline;text-decoration-thickness:0.5px;text-underline-offset:0.1px;text-decoration-color:#6a90d8;">1</span></div>
<div style="position:absolute;left:149.9px;top:220.8px;font-size:8.8px;line-height:1;color:#727272;white-space:nowrap;width:36.19999999999999px;text-align:center;"><span style="display:inline-block;transform:scaleX(0.74);">0</span></div>
<div style="position:absolute;left:236.8px;top:222.2px;width:7.0px;height:7.0px;background:radial-gradient(circle at 50% 40%,#74c850 0%,#44a828 60%,#2c8c18 100%);border-radius:50%;box-shadow:0 0 0 0.3px #2a8218;"><div style="position:absolute;left:0;top:0.9px;width:7px;text-align:center;font-size:5.6px;line-height:5.6px;font-weight:bold;color:rgba(220,255,210,0.6);">a</div></div>
<div style="position:absolute;left:248.8px;top:220.8px;font-size:8.8px;line-height:1;color:#727272;white-space:nowrap;width:37.0px;text-align:center;"><span style="display:inline-block;transform:scaleX(0.74);">0</span></div>
<div style="position:absolute;left:285.4px;top:220.8px;font-size:8.8px;line-height:1;color:#4070c8;white-space:nowrap;width:20.69999999999999px;text-align:center;"><span style="display:inline-block;transform:scaleX(0.74);text-decoration:underline;text-decoration-thickness:0.5px;text-underline-offset:0.1px;text-decoration-color:#6a90d8;">0</span></div>
<div style="position:absolute;left:304.7px;top:220.8px;font-size:8.8px;line-height:1;color:#4070c8;white-space:nowrap;width:19.0px;text-align:center;"><span style="display:inline-block;transform:scaleX(0.74);text-decoration:underline;text-decoration-thickness:0.5px;text-underline-offset:0.1px;text-decoration-color:#6a90d8;">1</span></div>
<div style="position:absolute;left:324.9px;top:220.8px;font-size:8.8px;line-height:1;color:#727272;white-space:nowrap;width:36.69999999999999px;text-align:center;"><span style="display:inline-block;transform:scaleX(0.74);">0</span></div>
<div style="position:absolute;left:412.0px;top:222.2px;width:7.0px;height:7.0px;background:radial-gradient(circle at 50% 40%,#74c850 0%,#44a828 60%,#2c8c18 100%);border-radius:50%;box-shadow:0 0 0 0.3px #2a8218;"><div style="position:absolute;left:0;top:0.9px;width:7px;text-align:center;font-size:5.6px;line-height:5.6px;font-weight:bold;color:rgba(220,255,210,0.6);">a</div></div>
<div style="position:absolute;left:424.0px;top:220.8px;font-size:8.8px;line-height:1;color:#727272;white-space:nowrap;width:36.799999999999955px;text-align:center;"><span style="display:inline-block;transform:scaleX(0.74);">0</span></div>
<div style="position:absolute;left:460.4px;top:220.8px;font-size:8.8px;line-height:1;color:#4070c8;white-space:nowrap;width:20.700000000000045px;text-align:center;"><span style="display:inline-block;transform:scaleX(0.74);text-decoration:underline;text-decoration-thickness:0.5px;text-underline-offset:0.1px;text-decoration-color:#6a90d8;">0</span></div>
<div style="position:absolute;left:479.7px;top:220.8px;font-size:8.8px;line-height:1;color:#4070c8;white-space:nowrap;width:19.0px;text-align:center;"><span style="display:inline-block;transform:scaleX(0.74);text-decoration:underline;text-decoration-thickness:0.5px;text-underline-offset:0.1px;text-decoration-color:#6a90d8;">1</span></div>
<div style="position:absolute;left:499.9px;top:220.8px;font-size:8.8px;line-height:1;color:#727272;white-space:nowrap;width:36.700000000000045px;text-align:center;"><span style="display:inline-block;transform:scaleX(0.74);">0</span></div>
<div style="position:absolute;left:586.95px;top:222.2px;width:7.0px;height:7.0px;background:radial-gradient(circle at 50% 40%,#74c850 0%,#44a828 60%,#2c8c18 100%);border-radius:50%;box-shadow:0 0 0 0.3px #2a8218;"><div style="position:absolute;left:0;top:0.9px;width:7px;text-align:center;font-size:5.6px;line-height:5.6px;font-weight:bold;color:rgba(220,255,210,0.6);">a</div></div>
<div style="position:absolute;left:598.5px;top:220.8px;font-size:8.8px;line-height:1;color:#727272;white-space:nowrap;width:37.0px;text-align:center;"><span style="display:inline-block;transform:scaleX(0.74);">5</span></div>
<div style="position:absolute;left:636.0px;top:220.8px;font-size:8.8px;line-height:1;color:#4070c8;white-space:nowrap;width:20.700000000000045px;text-align:center;"><span style="display:inline-block;transform:scaleX(0.74);text-decoration:underline;text-decoration-thickness:0.5px;text-underline-offset:0.1px;text-decoration-color:#6a90d8;">2</span></div>
<div style="position:absolute;left:656.2px;top:220.8px;font-size:8.8px;line-height:1;color:#4070c8;white-space:nowrap;width:22.0px;text-align:center;"><span style="display:inline-block;transform:scaleX(0.74);text-decoration:underline;text-decoration-thickness:0.5px;text-underline-offset:0.1px;text-decoration-color:#6a90d8;">999</span></div>
<div style="position:absolute;left:678.4px;top:220.8px;font-size:8.8px;line-height:1;color:#727272;white-space:nowrap;width:36.60000000000002px;text-align:center;"><span style="display:inline-block;transform:scaleX(0.74);">3</span></div>
<div style="position:absolute;left:765.1px;top:222.2px;width:7.0px;height:7.0px;background:radial-gradient(circle at 50% 40%,#74c850 0%,#44a828 60%,#2c8c18 100%);border-radius:50%;box-shadow:0 0 0 0.3px #2a8218;"><div style="position:absolute;left:0;top:0.9px;width:7px;text-align:center;font-size:5.6px;line-height:5.6px;font-weight:bold;color:rgba(220,255,210,0.6);">a</div></div>
<div style="position:absolute;left:776.8px;top:220.8px;font-size:8.8px;line-height:1;color:#727272;white-space:nowrap;width:36.60000000000002px;text-align:center;"><span style="display:inline-block;transform:scaleX(0.74);">18</span></div>
<div style="position:absolute;left:813.9px;top:220.8px;font-size:8.8px;line-height:1;color:#4070c8;white-space:nowrap;width:21.59999999999991px;text-align:center;"><span style="display:inline-block;transform:scaleX(0.74);text-decoration:underline;text-decoration-thickness:0.5px;text-underline-offset:0.1px;text-decoration-color:#6a90d8;">5</span></div>
<div style="position:absolute;left:835.0px;top:220.8px;font-size:8.8px;line-height:1;color:#4070c8;white-space:nowrap;width:22.0px;text-align:center;"><span style="display:inline-block;transform:scaleX(0.74);text-decoration:underline;text-decoration-thickness:0.5px;text-underline-offset:0.1px;text-decoration-color:#6a90d8;">999</span></div>
<div style="position:absolute;left:857.2px;top:220.8px;font-size:8.8px;line-height:1;color:#727272;white-space:nowrap;width:36.600000000000136px;text-align:center;"><span style="display:inline-block;transform:scaleX(0.74);">3</span></div>
<div style="position:absolute;left:62.1px;top:237.0px;width:7.0px;height:7.0px;background:radial-gradient(circle at 50% 40%,#74c850 0%,#44a828 60%,#2c8c18 100%);border-radius:50%;box-shadow:0 0 0 0.3px #2a8218;"><div style="position:absolute;left:0;top:0.9px;width:7px;text-align:center;font-size:5.6px;line-height:5.6px;font-weight:bold;color:rgba(220,255,210,0.6);">a</div></div>
<div style="position:absolute;left:74.1px;top:235.6px;font-size:8.8px;line-height:1;color:#727272;white-space:nowrap;width:36.20000000000002px;text-align:center;"><span style="display:inline-block;transform:scaleX(0.74);">0</span></div>
<div style="position:absolute;left:109.9px;top:235.6px;font-size:8.8px;line-height:1;color:#4070c8;white-space:nowrap;width:21.19999999999999px;text-align:center;"><span style="display:inline-block;transform:scaleX(0.74);text-decoration:underline;text-decoration-thickness:0.5px;text-underline-offset:0.1px;text-decoration-color:#6a90d8;">0</span></div>
<div style="position:absolute;left:129.7px;top:235.6px;font-size:8.8px;line-height:1;color:#4070c8;white-space:nowrap;width:19.0px;text-align:center;"><span style="display:inline-block;transform:scaleX(0.74);text-decoration:underline;text-decoration-thickness:0.5px;text-underline-offset:0.1px;text-decoration-color:#6a90d8;">1</span></div>
<div style="position:absolute;left:149.9px;top:235.6px;font-size:8.8px;line-height:1;color:#727272;white-space:nowrap;width:36.19999999999999px;text-align:center;"><span style="display:inline-block;transform:scaleX(0.74);">0</span></div>
<div style="position:absolute;left:236.8px;top:237.0px;width:7.0px;height:7.0px;background:radial-gradient(circle at 50% 40%,#74c850 0%,#44a828 60%,#2c8c18 100%);border-radius:50%;box-shadow:0 0 0 0.3px #2a8218;"><div style="position:absolute;left:0;top:0.9px;width:7px;text-align:center;font-size:5.6px;line-height:5.6px;font-weight:bold;color:rgba(220,255,210,0.6);">a</div></div>
<div style="position:absolute;left:248.8px;top:235.6px;font-size:8.8px;line-height:1;color:#727272;white-space:nowrap;width:37.0px;text-align:center;"><span style="display:inline-block;transform:scaleX(0.74);">0</span></div>
<div style="position:absolute;left:285.4px;top:235.6px;font-size:8.8px;line-height:1;color:#4070c8;white-space:nowrap;width:20.69999999999999px;text-align:center;"><span style="display:inline-block;transform:scaleX(0.74);text-decoration:underline;text-decoration-thickness:0.5px;text-underline-offset:0.1px;text-decoration-color:#6a90d8;">0</span></div>
<div style="position:absolute;left:304.7px;top:235.6px;font-size:8.8px;line-height:1;color:#4070c8;white-space:nowrap;width:19.0px;text-align:center;"><span style="display:inline-block;transform:scaleX(0.74);text-decoration:underline;text-decoration-thickness:0.5px;text-underline-offset:0.1px;text-decoration-color:#6a90d8;">1</span></div>
<div style="position:absolute;left:324.9px;top:235.6px;font-size:8.8px;line-height:1;color:#727272;white-space:nowrap;width:36.69999999999999px;text-align:center;"><span style="display:inline-block;transform:scaleX(0.74);">0</span></div>
<div style="position:absolute;left:412.0px;top:237.0px;width:7.0px;height:7.0px;background:radial-gradient(circle at 50% 40%,#74c850 0%,#44a828 60%,#2c8c18 100%);border-radius:50%;box-shadow:0 0 0 0.3px #2a8218;"><div style="position:absolute;left:0;top:0.9px;width:7px;text-align:center;font-size:5.6px;line-height:5.6px;font-weight:bold;color:rgba(220,255,210,0.6);">a</div></div>
<div style="position:absolute;left:424.0px;top:235.6px;font-size:8.8px;line-height:1;color:#727272;white-space:nowrap;width:36.799999999999955px;text-align:center;"><span style="display:inline-block;transform:scaleX(0.74);">0</span></div>
<div style="position:absolute;left:460.4px;top:235.6px;font-size:8.8px;line-height:1;color:#4070c8;white-space:nowrap;width:20.700000000000045px;text-align:center;"><span style="display:inline-block;transform:scaleX(0.74);text-decoration:underline;text-decoration-thickness:0.5px;text-underline-offset:0.1px;text-decoration-color:#6a90d8;">0</span></div>
<div style="position:absolute;left:479.7px;top:235.6px;font-size:8.8px;line-height:1;color:#4070c8;white-space:nowrap;width:19.0px;text-align:center;"><span style="display:inline-block;transform:scaleX(0.74);text-decoration:underline;text-decoration-thickness:0.5px;text-underline-offset:0.1px;text-decoration-color:#6a90d8;">1</span></div>
<div style="position:absolute;left:499.9px;top:235.6px;font-size:8.8px;line-height:1;color:#727272;white-space:nowrap;width:36.700000000000045px;text-align:center;"><span style="display:inline-block;transform:scaleX(0.74);">0</span></div>
<div style="position:absolute;left:586.95px;top:237.0px;width:7.0px;height:7.0px;background:radial-gradient(circle at 50% 40%,#74c850 0%,#44a828 60%,#2c8c18 100%);border-radius:50%;box-shadow:0 0 0 0.3px #2a8218;"><div style="position:absolute;left:0;top:0.9px;width:7px;text-align:center;font-size:5.6px;line-height:5.6px;font-weight:bold;color:rgba(220,255,210,0.6);">a</div></div>
<div style="position:absolute;left:598.5px;top:235.6px;font-size:8.8px;line-height:1;color:#727272;white-space:nowrap;width:37.0px;text-align:center;"><span style="display:inline-block;transform:scaleX(0.74);">5</span></div>
<div style="position:absolute;left:636.0px;top:235.6px;font-size:8.8px;line-height:1;color:#4070c8;white-space:nowrap;width:20.700000000000045px;text-align:center;"><span style="display:inline-block;transform:scaleX(0.74);text-decoration:underline;text-decoration-thickness:0.5px;text-underline-offset:0.1px;text-decoration-color:#6a90d8;">2</span></div>
<div style="position:absolute;left:656.2px;top:235.6px;font-size:8.8px;line-height:1;color:#4070c8;white-space:nowrap;width:22.0px;text-align:center;"><span style="display:inline-block;transform:scaleX(0.74);text-decoration:underline;text-decoration-thickness:0.5px;text-underline-offset:0.1px;text-decoration-color:#6a90d8;">999</span></div>
<div style="position:absolute;left:678.4px;top:235.6px;font-size:8.8px;line-height:1;color:#727272;white-space:nowrap;width:36.60000000000002px;text-align:center;"><span style="display:inline-block;transform:scaleX(0.74);">3</span></div>
<div style="position:absolute;left:765.1px;top:237.0px;width:7.0px;height:7.0px;background:radial-gradient(circle at 50% 40%,#74c850 0%,#44a828 60%,#2c8c18 100%);border-radius:50%;box-shadow:0 0 0 0.3px #2a8218;"><div style="position:absolute;left:0;top:0.9px;width:7px;text-align:center;font-size:5.6px;line-height:5.6px;font-weight:bold;color:rgba(220,255,210,0.6);">a</div></div>
<div style="position:absolute;left:776.8px;top:235.6px;font-size:8.8px;line-height:1;color:#727272;white-space:nowrap;width:36.60000000000002px;text-align:center;"><span style="display:inline-block;transform:scaleX(0.74);">19</span></div>
<div style="position:absolute;left:813.9px;top:235.6px;font-size:8.8px;line-height:1;color:#4070c8;white-space:nowrap;width:21.59999999999991px;text-align:center;"><span style="display:inline-block;transform:scaleX(0.74);text-decoration:underline;text-decoration-thickness:0.5px;text-underline-offset:0.1px;text-decoration-color:#6a90d8;">5</span></div>
<div style="position:absolute;left:835.0px;top:235.6px;font-size:8.8px;line-height:1;color:#4070c8;white-space:nowrap;width:22.0px;text-align:center;"><span style="display:inline-block;transform:scaleX(0.74);text-decoration:underline;text-decoration-thickness:0.5px;text-underline-offset:0.1px;text-decoration-color:#6a90d8;">999</span></div>
<div style="position:absolute;left:857.2px;top:235.6px;font-size:8.8px;line-height:1;color:#727272;white-space:nowrap;width:36.600000000000136px;text-align:center;"><span style="display:inline-block;transform:scaleX(0.74);">3</span></div>
<div style="position:absolute;left:55.5px;top:0.0px;width:784.4px;height:40.5px;background:#a69676;"></div>
<div style="position:absolute;left:55.5px;top:12.9px;width:784.4px;height:0.8px;background:#ece4d2;"></div>
<div style="position:absolute;left:55.5px;top:0.0px;width:1.2px;height:40.5px;background:#ece4d2;"></div>
<div style="position:absolute;left:55.5px;top:3.8px;font-size:6.35px;line-height:1;color:#fbf7ee;white-space:nowrap;width:174.70000000000002px;text-align:center;">Single (Single)</div>
<div style="position:absolute;left:55.5px;top:31.8px;font-size:5.5px;line-height:1;color:#fbf7ee;white-space:nowrap;line-height:7.4px;width:18.0px;text-align:center;">стоп</div>
<div style="position:absolute;left:72.8px;top:13.7px;width:1.4px;height:26.8px;background:#ddd3bc;"></div>
<div style="position:absolute;left:75.9px;top:20.3px;font-size:5.5px;line-height:1;color:#fbf7ee;white-space:nowrap;line-height:7.4px;">доступность<br>АСУ</div>
<div style="position:absolute;left:109.0px;top:13.7px;width:1.4px;height:26.8px;background:#ddd3bc;"></div>
<div style="position:absolute;left:112.1px;top:16.6px;font-size:5.5px;line-height:1;color:#fbf7ee;white-space:nowrap;line-height:7.4px;">In<br>House<br>Quota</div>
<div style="position:absolute;left:130.2px;top:13.7px;width:1.4px;height:26.8px;background:#ddd3bc;"></div>
<div style="position:absolute;left:133.3px;top:24.0px;font-size:5.5px;line-height:1;color:#fbf7ee;white-space:nowrap;line-height:7.4px;">квота</div>
<div style="position:absolute;left:149.2px;top:13.7px;width:1.4px;height:26.8px;background:#ddd3bc;"></div>
<div style="position:absolute;left:152.3px;top:20.3px;font-size:5.5px;line-height:1;color:#fbf7ee;white-space:nowrap;line-height:7.4px;">онлайн<br>доступность</div>
<div style="position:absolute;left:185.4px;top:13.7px;width:1.4px;height:26.8px;background:#ddd3bc;"></div>
<div style="position:absolute;left:188.5px;top:24.0px;font-size:5.5px;line-height:1;color:#fbf7ee;white-space:nowrap;line-height:7.4px;">бронь</div>
<div style="position:absolute;left:205.6px;top:13.7px;width:1.4px;height:26.8px;background:#ddd3bc;"></div>
<div style="position:absolute;left:208.7px;top:24.0px;font-size:5.5px;line-height:1;color:#fbf7ee;white-space:nowrap;line-height:7.4px;">отмена</div>
<div style="position:absolute;left:230.2px;top:0.0px;width:1.2px;height:40.5px;background:#ece4d2;"></div>
<div style="position:absolute;left:230.2px;top:3.8px;font-size:6.35px;line-height:1;color:#fbf7ee;white-space:nowrap;width:175.2px;text-align:center;">Double (Double)</div>
<div style="position:absolute;left:230.2px;top:31.8px;font-size:5.5px;line-height:1;color:#fbf7ee;white-space:nowrap;line-height:7.4px;width:18.0px;text-align:center;">стоп</div>
<div style="position:absolute;left:247.5px;top:13.7px;width:1.4px;height:26.8px;background:#ddd3bc;"></div>
<div style="position:absolute;left:250.6px;top:20.3px;font-size:5.5px;line-height:1;color:#fbf7ee;white-space:nowrap;line-height:7.4px;">доступность<br>АСУ</div>
<div style="position:absolute;left:284.5px;top:13.7px;width:1.4px;height:26.8px;background:#ddd3bc;"></div>
<div style="position:absolute;left:287.6px;top:16.6px;font-size:5.5px;line-height:1;color:#fbf7ee;white-space:nowrap;line-height:7.4px;">In<br>House<br>Quota</div>
<div style="position:absolute;left:305.2px;top:13.7px;width:1.4px;height:26.8px;background:#ddd3bc;"></div>
<div style="position:absolute;left:308.3px;top:24.0px;font-size:5.5px;line-height:1;color:#fbf7ee;white-space:nowrap;line-height:7.4px;">квота</div>
<div style="position:absolute;left:324.2px;top:13.7px;width:1.4px;height:26.8px;background:#ddd3bc;"></div>
<div style="position:absolute;left:327.3px;top:20.3px;font-size:5.5px;line-height:1;color:#fbf7ee;white-space:nowrap;line-height:7.4px;">онлайн<br>доступность</div>
<div style="position:absolute;left:360.9px;top:13.7px;width:1.4px;height:26.8px;background:#ddd3bc;"></div>
<div style="position:absolute;left:364.0px;top:24.0px;font-size:5.5px;line-height:1;color:#fbf7ee;white-space:nowrap;line-height:7.4px;">бронь</div>
<div style="position:absolute;left:380.5px;top:13.7px;width:1.4px;height:26.8px;background:#ddd3bc;"></div>
<div style="position:absolute;left:383.6px;top:24.0px;font-size:5.5px;line-height:1;color:#fbf7ee;white-space:nowrap;line-height:7.4px;">отмена</div>
<div style="position:absolute;left:405.4px;top:0.0px;width:1.2px;height:40.5px;background:#ece4d2;"></div>
<div style="position:absolute;left:405.4px;top:3.8px;font-size:6.35px;line-height:1;color:#fbf7ee;white-space:nowrap;width:175.10000000000002px;text-align:center;">Twin Connect (Twin Connect)</div>
<div style="position:absolute;left:405.4px;top:31.8px;font-size:5.5px;line-height:1;color:#fbf7ee;white-space:nowrap;line-height:7.4px;width:18.0px;text-align:center;">стоп</div>
<div style="position:absolute;left:422.7px;top:13.7px;width:1.4px;height:26.8px;background:#ddd3bc;"></div>
<div style="position:absolute;left:425.8px;top:20.3px;font-size:5.5px;line-height:1;color:#fbf7ee;white-space:nowrap;line-height:7.4px;">доступность<br>АСУ</div>
<div style="position:absolute;left:459.5px;top:13.7px;width:1.4px;height:26.8px;background:#ddd3bc;"></div>
<div style="position:absolute;left:462.6px;top:16.6px;font-size:5.5px;line-height:1;color:#fbf7ee;white-space:nowrap;line-height:7.4px;">In<br>House<br>Quota</div>
<div style="position:absolute;left:480.2px;top:13.7px;width:1.4px;height:26.8px;background:#ddd3bc;"></div>
<div style="position:absolute;left:483.3px;top:24.0px;font-size:5.5px;line-height:1;color:#fbf7ee;white-space:nowrap;line-height:7.4px;">квота</div>
<div style="position:absolute;left:499.2px;top:13.7px;width:1.4px;height:26.8px;background:#ddd3bc;"></div>
<div style="position:absolute;left:502.3px;top:20.3px;font-size:5.5px;line-height:1;color:#fbf7ee;white-space:nowrap;line-height:7.4px;">онлайн<br>доступность</div>
<div style="position:absolute;left:535.9px;top:13.7px;width:1.4px;height:26.8px;background:#ddd3bc;"></div>
<div style="position:absolute;left:539.0px;top:24.0px;font-size:5.5px;line-height:1;color:#fbf7ee;white-space:nowrap;line-height:7.4px;">бронь</div>
<div style="position:absolute;left:555.5px;top:13.7px;width:1.4px;height:26.8px;background:#ddd3bc;"></div>
<div style="position:absolute;left:558.6px;top:24.0px;font-size:5.5px;line-height:1;color:#fbf7ee;white-space:nowrap;line-height:7.4px;">отмена</div>
<div style="position:absolute;left:580.5px;top:0.0px;width:1.2px;height:40.5px;background:#ece4d2;"></div>
<div style="position:absolute;left:580.5px;top:3.8px;font-size:6.35px;line-height:1;color:#fbf7ee;white-space:nowrap;width:178.0px;text-align:center;">Classic SGL (Classic SGL)</div>
<div style="position:absolute;left:580.5px;top:31.8px;font-size:5.5px;line-height:1;color:#fbf7ee;white-space:nowrap;line-height:7.4px;width:17.699999999999932px;text-align:center;">стоп</div>
<div style="position:absolute;left:597.5px;top:13.7px;width:1.4px;height:26.8px;background:#ddd3bc;"></div>
<div style="position:absolute;left:600.6px;top:20.3px;font-size:5.5px;line-height:1;color:#fbf7ee;white-space:nowrap;line-height:7.4px;">доступность<br>АСУ</div>
<div style="position:absolute;left:634.5px;top:13.7px;width:1.4px;height:26.8px;background:#ddd3bc;"></div>
<div style="position:absolute;left:637.6px;top:16.6px;font-size:5.5px;line-height:1;color:#fbf7ee;white-space:nowrap;line-height:7.4px;">In<br>House<br>Quota</div>
<div style="position:absolute;left:655.2px;top:13.7px;width:1.4px;height:26.8px;background:#ddd3bc;"></div>
<div style="position:absolute;left:658.3px;top:24.0px;font-size:5.5px;line-height:1;color:#fbf7ee;white-space:nowrap;line-height:7.4px;">квота</div>
<div style="position:absolute;left:677.2px;top:13.7px;width:1.4px;height:26.8px;background:#ddd3bc;"></div>
<div style="position:absolute;left:680.3px;top:20.3px;font-size:5.5px;line-height:1;color:#fbf7ee;white-space:nowrap;line-height:7.4px;">онлайн<br>доступность</div>
<div style="position:absolute;left:713.8px;top:13.7px;width:1.4px;height:26.8px;background:#ddd3bc;"></div>
<div style="position:absolute;left:716.9px;top:24.0px;font-size:5.5px;line-height:1;color:#fbf7ee;white-space:nowrap;line-height:7.4px;">бронь</div>
<div style="position:absolute;left:734.4px;top:13.7px;width:1.4px;height:26.8px;background:#ddd3bc;"></div>
<div style="position:absolute;left:737.5px;top:24.0px;font-size:5.5px;line-height:1;color:#fbf7ee;white-space:nowrap;line-height:7.4px;">отмена</div>
<div style="position:absolute;left:758.5px;top:0.0px;width:1.2px;height:40.5px;background:#ece4d2;"></div>
<div style="position:absolute;left:758.5px;top:3.8px;font-size:6.35px;line-height:1;color:#fbf7ee;white-space:nowrap;width:178.80000000000007px;text-align:center;">Classic DBL (Classic DBL)</div>
<div style="position:absolute;left:758.5px;top:31.8px;font-size:5.5px;line-height:1;color:#fbf7ee;white-space:nowrap;line-height:7.4px;width:18.0px;text-align:center;">стоп</div>
<div style="position:absolute;left:775.8px;top:13.7px;width:1.4px;height:26.8px;background:#ddd3bc;"></div>
<div style="position:absolute;left:778.9px;top:20.3px;font-size:5.5px;line-height:1;color:#fbf7ee;white-space:nowrap;line-height:7.4px;">доступность<br>АСУ</div>
<div style="position:absolute;left:812.4px;top:13.7px;width:1.4px;height:26.8px;background:#ddd3bc;"></div>
<div style="position:absolute;left:815.5px;top:16.6px;font-size:5.5px;line-height:1;color:#fbf7ee;white-space:nowrap;line-height:7.4px;">In<br>House<br>Quota</div>
<div style="position:absolute;left:834.0px;top:13.7px;width:1.4px;height:26.8px;background:#ddd3bc;"></div>
<div style="position:absolute;left:839.1px;top:24.0px;font-size:5.5px;line-height:1;color:#fbf7ee;white-space:nowrap;line-height:7.4px;">квота</div>
<div style="position:absolute;left:856.0px;top:13.7px;width:1.4px;height:26.8px;background:#ddd3bc;"></div>
<div style="position:absolute;left:859.1px;top:20.3px;font-size:5.5px;line-height:1;color:#fbf7ee;white-space:nowrap;line-height:7.4px;">онлайн<br>доступность</div>
<div style="position:absolute;left:892.6px;top:13.7px;width:1.4px;height:26.8px;background:#ddd3bc;"></div>
<div style="position:absolute;left:895.7px;top:24.0px;font-size:5.5px;line-height:1;color:#fbf7ee;white-space:nowrap;line-height:7.4px;">бронь</div>
<div style="position:absolute;left:913.2px;top:13.7px;width:1.4px;height:26.8px;background:#ddd3bc;"></div>
<div style="position:absolute;left:916.3px;top:24.0px;font-size:5.5px;line-height:1;color:#fbf7ee;white-space:nowrap;line-height:7.4px;">отмена</div>
<div style="position:absolute;left:0.0px;top:0.0px;width:55.5px;height:40.5px;background:#8c7b5a;"></div>
<div style="position:absolute;left:0.0px;top:3.9px;font-size:6.95px;line-height:1;color:#fbf7ee;white-space:nowrap;width:55.5px;text-align:center;"><span style="display:inline-block;transform:scaleX(0.92)">2021</span></div>
<div style="position:absolute;left:55.5px;top:40.5px;width:784.4px;height:5px;background:linear-gradient(rgba(90,70,40,0.35),rgba(90,70,40,0));"></div>
<div style="position:absolute;left:0.0px;top:40.5px;width:55.5px;height:14.8px;background:#f6f4e4;"></div>
<div style="position:absolute;left:0.0px;top:54.1px;width:55.5px;height:1.2px;background:#e2dcc0;"></div>
<div style="position:absolute;left:7.3px;top:44.6px;width:7.0px;height:7.0px;background:radial-gradient(circle at 50% 40%,#74c850 0%,#44a828 60%,#2c8c18 100%);border-radius:50%;box-shadow:0 0 0 0.3px #2a8218;"><div style="position:absolute;left:0;top:0.9px;width:7px;text-align:center;font-size:5.6px;line-height:5.6px;font-weight:bold;color:rgba(220,255,210,0.6);">a</div></div>
<div style="position:absolute;left:17.3px;top:45.1px;font-size:6.9px;line-height:1;color:#5e5e5e;white-space:nowrap;transform:scaleX(0.84);transform-origin:0 0;">07 май.</div>
<div style="position:absolute;left:43.8px;top:45.1px;font-size:6.9px;line-height:1;color:#777;white-space:nowrap;transform:scaleX(0.84);transform-origin:0 0;">Пт</div>
<div style="position:absolute;left:0.0px;top:55.3px;width:55.5px;height:14.8px;background:#ece8d2;"></div>
<div style="position:absolute;left:0.0px;top:68.9px;width:55.5px;height:1.2px;background:#e2dcc0;"></div>
<div style="position:absolute;left:7.3px;top:59.4px;width:7.0px;height:7.0px;background:radial-gradient(circle at 50% 40%,#74c850 0%,#44a828 60%,#2c8c18 100%);border-radius:50%;box-shadow:0 0 0 0.3px #2a8218;"><div style="position:absolute;left:0;top:0.9px;width:7px;text-align:center;font-size:5.6px;line-height:5.6px;font-weight:bold;color:rgba(220,255,210,0.6);">a</div></div>
<div style="position:absolute;left:17.3px;top:59.9px;font-size:6.9px;line-height:1;color:#5e5e5e;white-space:nowrap;transform:scaleX(0.84);transform-origin:0 0;">08 май.</div>
<div style="position:absolute;left:43.8px;top:59.9px;font-size:6.9px;line-height:1;color:#777;white-space:nowrap;transform:scaleX(0.84);transform-origin:0 0;">Сб</div>
<div style="position:absolute;left:0.0px;top:70.1px;width:55.5px;height:14.8px;background:#ece8d2;"></div>
<div style="position:absolute;left:0.0px;top:83.7px;width:55.5px;height:1.2px;background:#e2dcc0;"></div>
<div style="position:absolute;left:7.3px;top:74.2px;width:7.0px;height:7.0px;background:radial-gradient(circle at 50% 40%,#74c850 0%,#44a828 60%,#2c8c18 100%);border-radius:50%;box-shadow:0 0 0 0.3px #2a8218;"><div style="position:absolute;left:0;top:0.9px;width:7px;text-align:center;font-size:5.6px;line-height:5.6px;font-weight:bold;color:rgba(220,255,210,0.6);">a</div></div>
<div style="position:absolute;left:17.3px;top:74.7px;font-size:6.9px;line-height:1;color:#5e5e5e;white-space:nowrap;transform:scaleX(0.84);transform-origin:0 0;">09 май.</div>
<div style="position:absolute;left:43.8px;top:74.7px;font-size:6.9px;line-height:1;color:#777;white-space:nowrap;transform:scaleX(0.84);transform-origin:0 0;">Вс</div>
<div style="position:absolute;left:0.0px;top:84.9px;width:55.5px;height:14.8px;background:#f6f4e4;"></div>
<div style="position:absolute;left:0.0px;top:98.5px;width:55.5px;height:1.2px;background:#e2dcc0;"></div>
<div style="position:absolute;left:7.3px;top:89.0px;width:7.0px;height:7.0px;background:radial-gradient(circle at 50% 40%,#74c850 0%,#44a828 60%,#2c8c18 100%);border-radius:50%;box-shadow:0 0 0 0.3px #2a8218;"><div style="position:absolute;left:0;top:0.9px;width:7px;text-align:center;font-size:5.6px;line-height:5.6px;font-weight:bold;color:rgba(220,255,210,0.6);">a</div></div>
<div style="position:absolute;left:17.3px;top:89.5px;font-size:6.9px;line-height:1;color:#5e5e5e;white-space:nowrap;transform:scaleX(0.84);transform-origin:0 0;">10 май.</div>
<div style="position:absolute;left:43.8px;top:89.5px;font-size:6.9px;line-height:1;color:#777;white-space:nowrap;transform:scaleX(0.84);transform-origin:0 0;">Пн</div>
<div style="position:absolute;left:0.0px;top:99.7px;width:55.5px;height:14.8px;background:#f6f4e4;"></div>
<div style="position:absolute;left:0.0px;top:113.3px;width:55.5px;height:1.2px;background:#e2dcc0;"></div>
<div style="position:absolute;left:7.3px;top:103.8px;width:7.0px;height:7.0px;background:radial-gradient(circle at 50% 40%,#74c850 0%,#44a828 60%,#2c8c18 100%);border-radius:50%;box-shadow:0 0 0 0.3px #2a8218;"><div style="position:absolute;left:0;top:0.9px;width:7px;text-align:center;font-size:5.6px;line-height:5.6px;font-weight:bold;color:rgba(220,255,210,0.6);">a</div></div>
<div style="position:absolute;left:17.3px;top:104.3px;font-size:6.9px;line-height:1;color:#5e5e5e;white-space:nowrap;transform:scaleX(0.84);transform-origin:0 0;">11 май.</div>
<div style="position:absolute;left:43.8px;top:104.3px;font-size:6.9px;line-height:1;color:#777;white-space:nowrap;transform:scaleX(0.84);transform-origin:0 0;">Вт</div>
<div style="position:absolute;left:0.0px;top:114.5px;width:55.5px;height:14.8px;background:#f6f4e4;"></div>
<div style="position:absolute;left:0.0px;top:128.1px;width:55.5px;height:1.2px;background:#e2dcc0;"></div>
<div style="position:absolute;left:7.3px;top:118.6px;width:7.0px;height:7.0px;background:radial-gradient(circle at 50% 40%,#74c850 0%,#44a828 60%,#2c8c18 100%);border-radius:50%;box-shadow:0 0 0 0.3px #2a8218;"><div style="position:absolute;left:0;top:0.9px;width:7px;text-align:center;font-size:5.6px;line-height:5.6px;font-weight:bold;color:rgba(220,255,210,0.6);">a</div></div>
<div style="position:absolute;left:17.3px;top:119.1px;font-size:6.9px;line-height:1;color:#5e5e5e;white-space:nowrap;transform:scaleX(0.84);transform-origin:0 0;">12 май.</div>
<div style="position:absolute;left:43.8px;top:119.1px;font-size:6.9px;line-height:1;color:#777;white-space:nowrap;transform:scaleX(0.84);transform-origin:0 0;">Ср</div>
<div style="position:absolute;left:0.0px;top:129.3px;width:55.5px;height:14.8px;background:#f6f4e4;"></div>
<div style="position:absolute;left:0.0px;top:142.9px;width:55.5px;height:1.2px;background:#e2dcc0;"></div>
<div style="position:absolute;left:7.3px;top:133.4px;width:7.0px;height:7.0px;background:radial-gradient(circle at 50% 40%,#74c850 0%,#44a828 60%,#2c8c18 100%);border-radius:50%;box-shadow:0 0 0 0.3px #2a8218;"><div style="position:absolute;left:0;top:0.9px;width:7px;text-align:center;font-size:5.6px;line-height:5.6px;font-weight:bold;color:rgba(220,255,210,0.6);">a</div></div>
<div style="position:absolute;left:17.3px;top:133.9px;font-size:6.9px;line-height:1;color:#5e5e5e;white-space:nowrap;transform:scaleX(0.84);transform-origin:0 0;">13 май.</div>
<div style="position:absolute;left:43.8px;top:133.9px;font-size:6.9px;line-height:1;color:#777;white-space:nowrap;transform:scaleX(0.84);transform-origin:0 0;">Чт</div>
<div style="position:absolute;left:0.0px;top:144.1px;width:55.5px;height:14.8px;background:#f6f4e4;"></div>
<div style="position:absolute;left:0.0px;top:157.7px;width:55.5px;height:1.2px;background:#e2dcc0;"></div>
<div style="position:absolute;left:7.3px;top:148.2px;width:7.0px;height:7.0px;background:radial-gradient(circle at 50% 40%,#74c850 0%,#44a828 60%,#2c8c18 100%);border-radius:50%;box-shadow:0 0 0 0.3px #2a8218;"><div style="position:absolute;left:0;top:0.9px;width:7px;text-align:center;font-size:5.6px;line-height:5.6px;font-weight:bold;color:rgba(220,255,210,0.6);">a</div></div>
<div style="position:absolute;left:17.3px;top:148.7px;font-size:6.9px;line-height:1;color:#5e5e5e;white-space:nowrap;transform:scaleX(0.84);transform-origin:0 0;">14 май.</div>
<div style="position:absolute;left:43.8px;top:148.7px;font-size:6.9px;line-height:1;color:#777;white-space:nowrap;transform:scaleX(0.84);transform-origin:0 0;">Пт</div>
<div style="position:absolute;left:0.0px;top:158.9px;width:55.5px;height:14.8px;background:#ece8d2;"></div>
<div style="position:absolute;left:0.0px;top:172.5px;width:55.5px;height:1.2px;background:#e2dcc0;"></div>
<div style="position:absolute;left:7.3px;top:163.0px;width:7.0px;height:7.0px;background:radial-gradient(circle at 50% 40%,#74c850 0%,#44a828 60%,#2c8c18 100%);border-radius:50%;box-shadow:0 0 0 0.3px #2a8218;"><div style="position:absolute;left:0;top:0.9px;width:7px;text-align:center;font-size:5.6px;line-height:5.6px;font-weight:bold;color:rgba(220,255,210,0.6);">a</div></div>
<div style="position:absolute;left:17.3px;top:163.5px;font-size:6.9px;line-height:1;color:#5e5e5e;white-space:nowrap;transform:scaleX(0.84);transform-origin:0 0;">15 май.</div>
<div style="position:absolute;left:43.8px;top:163.5px;font-size:6.9px;line-height:1;color:#777;white-space:nowrap;transform:scaleX(0.84);transform-origin:0 0;">Сб</div>
<div style="position:absolute;left:0.0px;top:173.7px;width:55.5px;height:14.8px;background:#ece8d2;"></div>
<div style="position:absolute;left:0.0px;top:187.3px;width:55.5px;height:1.2px;background:#e2dcc0;"></div>
<div style="position:absolute;left:7.3px;top:177.8px;width:7.0px;height:7.0px;background:radial-gradient(circle at 50% 40%,#74c850 0%,#44a828 60%,#2c8c18 100%);border-radius:50%;box-shadow:0 0 0 0.3px #2a8218;"><div style="position:absolute;left:0;top:0.9px;width:7px;text-align:center;font-size:5.6px;line-height:5.6px;font-weight:bold;color:rgba(220,255,210,0.6);">a</div></div>
<div style="position:absolute;left:17.3px;top:178.3px;font-size:6.9px;line-height:1;color:#5e5e5e;white-space:nowrap;transform:scaleX(0.84);transform-origin:0 0;">16 май.</div>
<div style="position:absolute;left:43.8px;top:178.3px;font-size:6.9px;line-height:1;color:#777;white-space:nowrap;transform:scaleX(0.84);transform-origin:0 0;">Вс</div>
<div style="position:absolute;left:0.0px;top:188.5px;width:55.5px;height:14.8px;background:#f6f4e4;"></div>
<div style="position:absolute;left:0.0px;top:202.1px;width:55.5px;height:1.2px;background:#e2dcc0;"></div>
<div style="position:absolute;left:7.3px;top:192.6px;width:7.0px;height:7.0px;background:radial-gradient(circle at 50% 40%,#74c850 0%,#44a828 60%,#2c8c18 100%);border-radius:50%;box-shadow:0 0 0 0.3px #2a8218;"><div style="position:absolute;left:0;top:0.9px;width:7px;text-align:center;font-size:5.6px;line-height:5.6px;font-weight:bold;color:rgba(220,255,210,0.6);">a</div></div>
<div style="position:absolute;left:17.3px;top:193.1px;font-size:6.9px;line-height:1;color:#5e5e5e;white-space:nowrap;transform:scaleX(0.84);transform-origin:0 0;">17 май.</div>
<div style="position:absolute;left:43.8px;top:193.1px;font-size:6.9px;line-height:1;color:#777;white-space:nowrap;transform:scaleX(0.84);transform-origin:0 0;">Пн</div>
<div style="position:absolute;left:0.0px;top:203.3px;width:55.5px;height:14.8px;background:#f6f4e4;"></div>
<div style="position:absolute;left:0.0px;top:216.9px;width:55.5px;height:1.2px;background:#e2dcc0;"></div>
<div style="position:absolute;left:7.3px;top:207.4px;width:7.0px;height:7.0px;background:radial-gradient(circle at 50% 40%,#74c850 0%,#44a828 60%,#2c8c18 100%);border-radius:50%;box-shadow:0 0 0 0.3px #2a8218;"><div style="position:absolute;left:0;top:0.9px;width:7px;text-align:center;font-size:5.6px;line-height:5.6px;font-weight:bold;color:rgba(220,255,210,0.6);">a</div></div>
<div style="position:absolute;left:17.3px;top:207.9px;font-size:6.9px;line-height:1;color:#5e5e5e;white-space:nowrap;transform:scaleX(0.84);transform-origin:0 0;">18 май.</div>
<div style="position:absolute;left:43.8px;top:207.9px;font-size:6.9px;line-height:1;color:#777;white-space:nowrap;transform:scaleX(0.84);transform-origin:0 0;">Вт</div>
<div style="position:absolute;left:0.0px;top:218.1px;width:55.5px;height:14.8px;background:#f6f4e4;"></div>
<div style="position:absolute;left:0.0px;top:231.7px;width:55.5px;height:1.2px;background:#e2dcc0;"></div>
<div style="position:absolute;left:7.3px;top:222.2px;width:7.0px;height:7.0px;background:radial-gradient(circle at 50% 40%,#74c850 0%,#44a828 60%,#2c8c18 100%);border-radius:50%;box-shadow:0 0 0 0.3px #2a8218;"><div style="position:absolute;left:0;top:0.9px;width:7px;text-align:center;font-size:5.6px;line-height:5.6px;font-weight:bold;color:rgba(220,255,210,0.6);">a</div></div>
<div style="position:absolute;left:17.3px;top:222.7px;font-size:6.9px;line-height:1;color:#5e5e5e;white-space:nowrap;transform:scaleX(0.84);transform-origin:0 0;">19 май.</div>
<div style="position:absolute;left:43.8px;top:222.7px;font-size:6.9px;line-height:1;color:#777;white-space:nowrap;transform:scaleX(0.84);transform-origin:0 0;">Ср</div>
<div style="position:absolute;left:0.0px;top:232.9px;width:55.5px;height:14.8px;background:#f6f4e4;"></div>
<div style="position:absolute;left:0.0px;top:246.5px;width:55.5px;height:1.2px;background:#e2dcc0;"></div>
<div style="position:absolute;left:7.3px;top:237.0px;width:7.0px;height:7.0px;background:radial-gradient(circle at 50% 40%,#74c850 0%,#44a828 60%,#2c8c18 100%);border-radius:50%;box-shadow:0 0 0 0.3px #2a8218;"><div style="position:absolute;left:0;top:0.9px;width:7px;text-align:center;font-size:5.6px;line-height:5.6px;font-weight:bold;color:rgba(220,255,210,0.6);">a</div></div>
<div style="position:absolute;left:17.3px;top:237.5px;font-size:6.9px;line-height:1;color:#5e5e5e;white-space:nowrap;transform:scaleX(0.84);transform-origin:0 0;">20 май.</div>
<div style="position:absolute;left:43.8px;top:237.5px;font-size:6.9px;line-height:1;color:#777;white-space:nowrap;transform:scaleX(0.84);transform-origin:0 0;">Чт</div>
<div style="position:absolute;left:0.0px;top:40.5px;width:0.8px;height:207.2px;background:#d8d4c4;"></div>
<div style="position:absolute;left:0.0px;top:40.5px;width:55.5px;height:1.0px;background:#d2c8b0;"></div>
<div style="position:absolute;left:0.0px;top:246.5px;width:55.5px;height:1.2px;background:#c9bd9c;"></div>
<div style="position:absolute;left:0.0px;top:247.7px;width:60.9px;height:1.6px;background:linear-gradient(rgba(90,70,40,0.3),rgba(90,70,40,0));"></div>
<div style="position:absolute;left:55.5px;top:40.5px;width:6px;height:207.2px;background:linear-gradient(90deg,rgba(90,70,40,0.35),rgba(90,70,40,0));"></div>
<div style="position:absolute;left:54.7px;top:40.5px;width:1px;height:207.2px;background:#bdb090;"></div>
<div style="position:absolute;left:0.0px;top:248.3px;width:839.9px;height:7.4px;background:#f0f0f0;"></div>
<div style="position:absolute;left:8.7px;top:248.3px;width:344.2px;height:7.4px;background:#c1c1c1;"></div>
<div style="position:absolute;left:3.4px;top:250px;width:0;height:0;border-top:2px solid transparent;border-bottom:2px solid transparent;border-right:2.5px solid #777;"></div>
<div style="position:absolute;left:833.5px;top:250.5px;width:0;height:0;border-top:2px solid transparent;border-bottom:2px solid transparent;border-left:2.5px solid #333;"></div>
</div>
<div style="position:absolute;left:147.1px;top:433.2px;width:840px;height:4.6px;background:#fff;"></div>
<div style="position:absolute;left:147.1px;top:437.8px;width:840px;height:1.5px;background:#e6e9ee;"></div>
<div style="position:absolute;left:131px;top:452px;width:869px;height:11px;background:#e9edf5;"></div>
<div style="position:absolute;left:761px;top:461px;width:61.2px;height:4px;background:#000;border-radius:2px 2px 0 0;"></div>
<div style="position:absolute;left:832px;top:461.8px;width:66px;height:4px;background:#333;border-radius:2px 2px 0 0;"></div>
<svg style="position:absolute;left:0;top:0" width="1000" height="463"><line x1="166.8" y1="39.1" x2="113.00076798062221" y2="57.61058322022659" stroke="#ff0d0d" stroke-width="2" stroke-linecap="round"/><polygon points="107.8,59.4 113.0353863437598,54.63757101558738 114.85733797407454,59.9328984140391" fill="#ff0d0d"/></svg>
<svg style="position:absolute;left:0;top:0" width="1000" height="463"><line x1="97.6" y1="87.6" x2="76.00321946059944" y2="91.52668737080009" stroke="#ff0d0d" stroke-width="2" stroke-linecap="round"/><polygon points="70.1,92.6 76.53987577519939,88.88812715735034 77.43430296619931,93.80747670784987" fill="#ff0d0d"/></svg>
<svg style="position:absolute;left:0;top:0" width="1000" height="463"><line x1="808.0" y1="178.9" x2="772.600843872358" y2="215.92462758248263" stroke="#ff0d0d" stroke-width="1.9" stroke-linecap="round"/><polygon points="768.8,219.9 771.2680804365962,213.26685753518808 775.3157323526138,217.13680765977085" fill="#ff0d0d"/></svg>
<svg style="position:absolute;left:0;top:0" width="1000" height="463"><line x1="952.9" y1="179.4" x2="940.8287735248778" y2="221.116738553731" stroke="#ff0d0d" stroke-width="1.9" stroke-linecap="round"/><polygon points="939.3,226.4 938.4170719749368,219.3778608599261 943.7963927202288,220.93443026707445" fill="#ff0d0d"/></svg>
</body></html>
